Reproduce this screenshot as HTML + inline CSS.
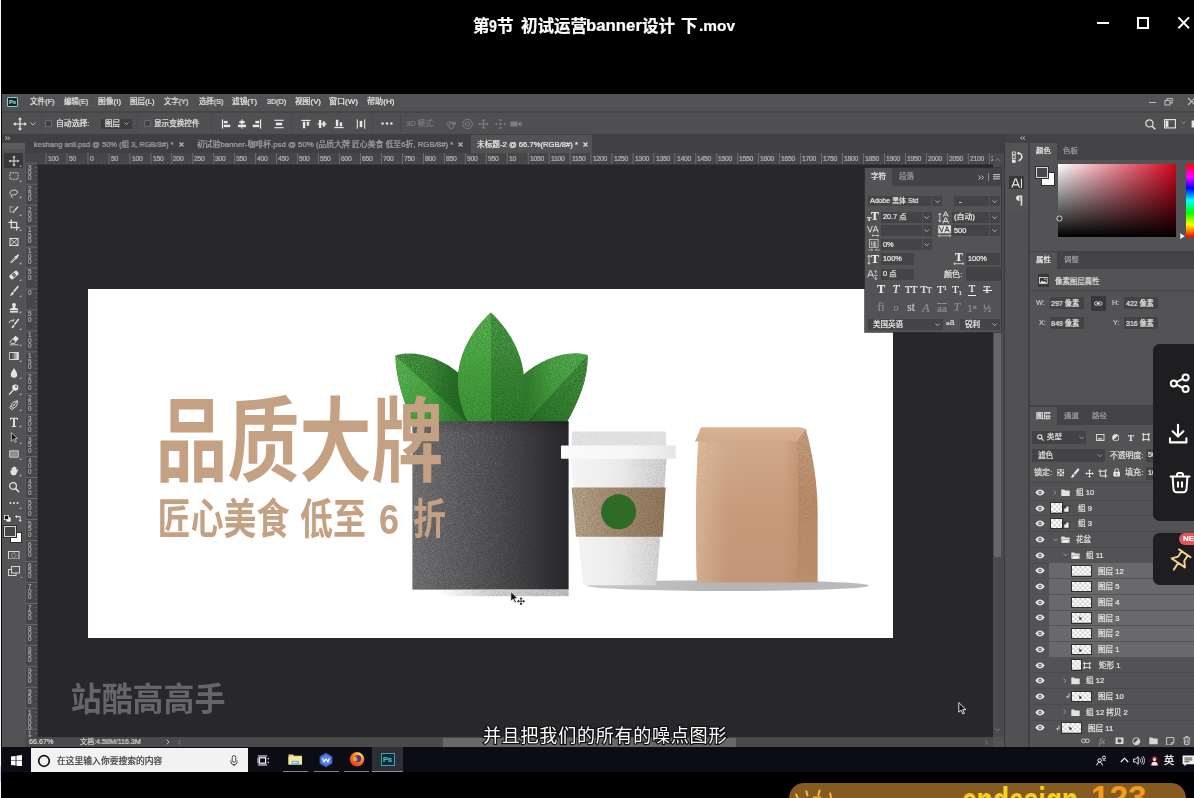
<!DOCTYPE html>
<html lang="zh"><head><meta charset="utf-8"><title>第9节 初试运营banner设计 下.mov</title>
<style>
html,body{margin:0;padding:0;background:#000}
body{width:1194px;height:798px;position:relative;overflow:hidden;font-family:"Liberation Sans","Noto Sans CJK SC",sans-serif}
.b{position:absolute;display:block}
.t{position:absolute;white-space:nowrap;font-family:"Liberation Sans","Noto Sans CJK SC",sans-serif;will-change:transform;-webkit-text-stroke:0.22px currentColor}
#ps{position:absolute;left:0;top:0;width:1194px;height:798px}
</style></head>
<body>
<div class="b" style="left:0px;top:0px;width:1194px;height:94px;background:#000;"></div><div class="t" style="left:473.3px;top:16.7px;font-size:16.50px;line-height:19.8px;color:#fff;font-weight:bold;">第</div><div class="t" style="left:489.1px;top:16.5px;font-size:16.40px;line-height:19.7px;color:#fff;font-weight:bold;transform:scaleX(0.86);transform-origin:0 0;">9</div><div class="t" style="left:497.2px;top:16.7px;font-size:16.50px;line-height:19.8px;color:#fff;font-weight:bold;">节</div><div class="t" style="left:520.7px;top:16.7px;font-size:16.50px;line-height:19.8px;color:#fff;font-weight:bold;">初试运营</div><div class="t" style="left:586.2px;top:16.2px;font-size:16.80px;line-height:20.2px;color:#fff;font-weight:bold;">banner</div><div class="t" style="left:642.2px;top:16.7px;font-size:16.50px;line-height:19.8px;color:#fff;font-weight:bold;">设计</div><div class="t" style="left:681.4px;top:16.7px;font-size:16.50px;line-height:19.8px;color:#fff;font-weight:bold;">下</div><div class="t" style="left:698.6px;top:17.0px;font-size:15.42px;line-height:18.5px;color:#fff;font-weight:bold;">.mov</div><div class="b" style="left:1096.9px;top:21.6px;width:12.3px;height:2.3px;background:#fff;"></div><div class="b" style="left:1137px;top:16.9px;width:12px;height:12px;background:transparent;border:2.1px solid #fff;box-sizing:border-box"></div><svg class="b" style="left:1177px;top:16px;" width="14" height="14" viewBox="0 0 14 14"><path d="M1.4 1.4 L12 12.2 M12 1.4 L1.4 12.2" stroke="#fff" stroke-width="2" fill="none"/></svg>
<div id="ps">
<div class="b" style="left:0px;top:94px;width:1194px;height:653px;background:#535355;"></div><div class="b" style="left:0px;top:94px;width:2px;height:653px;background:#0a0a0a;"></div><div class="b" style="left:2px;top:94px;width:1192.5px;height:17.5px;background:#525254;"></div><div class="b" style="left:2px;top:111.2px;width:1192.5px;height:1.4px;background:#464648;"></div><div class="b" style="left:6.8px;top:96.9px;width:11px;height:10.2px;background:#032a2f;border:1.1px solid #a4c2c4;box-sizing:border-box;border-radius:1px"></div><div class="t" style="left:9px;top:98.6px;font-size:6px;line-height:7px;color:#9ccaca;font-weight:bold;letter-spacing:-0.2px">Ps</div><div class="t" style="left:30.2px;top:97.1px;font-size:7.60px;line-height:9.1px;color:#e6e6e6;transform:scaleX(0.988);transform-origin:0 50%;">文件(F)</div><div class="t" style="left:64.0px;top:97.1px;font-size:7.60px;line-height:9.1px;color:#e6e6e6;transform:scaleX(0.963);transform-origin:0 50%;">编辑(E)</div><div class="t" style="left:98.0px;top:97.1px;font-size:7.60px;line-height:9.1px;color:#e6e6e6;transform:scaleX(1.028);transform-origin:0 50%;">图像(I)</div><div class="t" style="left:130.0px;top:97.1px;font-size:7.60px;line-height:9.1px;color:#e6e6e6;transform:scaleX(1.000);transform-origin:0 50%;">图层(L)</div><div class="t" style="left:164.0px;top:97.1px;font-size:7.60px;line-height:9.1px;color:#e6e6e6;transform:scaleX(0.963);transform-origin:0 50%;">文字(Y)</div><div class="t" style="left:198.5px;top:97.1px;font-size:7.60px;line-height:9.1px;color:#e6e6e6;transform:scaleX(0.967);transform-origin:0 50%;">选择(S)</div><div class="t" style="left:232.4px;top:97.1px;font-size:7.60px;line-height:9.1px;color:#e6e6e6;transform:scaleX(1.008);transform-origin:0 50%;">滤镜(T)</div><div class="t" style="left:266.8px;top:97.1px;font-size:7.60px;line-height:9.1px;color:#e6e6e6;transform:scaleX(0.947);transform-origin:0 50%;">3D(D)</div><div class="t" style="left:294.5px;top:97.1px;font-size:7.60px;line-height:9.1px;color:#e6e6e6;transform:scaleX(1.026);transform-origin:0 50%;">视图(V)</div><div class="t" style="left:328.5px;top:97.1px;font-size:7.60px;line-height:9.1px;color:#e6e6e6;transform:scaleX(1.057);transform-origin:0 50%;">窗口(W)</div><div class="t" style="left:366.5px;top:97.1px;font-size:7.60px;line-height:9.1px;color:#e6e6e6;transform:scaleX(1.068);transform-origin:0 50%;">帮助(H)</div><div class="b" style="left:1149px;top:102px;width:6.5px;height:1.4px;background:#bdbdbd;"></div><svg class="b" style="left:1164px;top:97px;" width="10" height="9" viewBox="0 0 10 9"><path d="M1 3.5h5v4.5h-5z M3.2 3.5v-2h5v4.5h-2.2" stroke="#bdbdbd" stroke-width="1.1" fill="none"/></svg><svg class="b" style="left:1187px;top:97px;" width="7" height="9" viewBox="0 0 7 9"><path d="M1 1l7 7M8 1l-7 7" stroke="#bdbdbd" stroke-width="1.2" fill="none"/></svg><div class="b" style="left:2px;top:112.5px;width:1192.5px;height:21.5px;background:#505052;"></div><div class="b" style="left:2px;top:134px;width:1003px;height:18.5px;background:#403f42;"></div><div class="b" style="left:470.8px;top:135px;width:121.5px;height:17.5px;background:#535355;"></div><div class="t" style="left:33.8px;top:139.9px;font-size:7.60px;line-height:9.1px;color:#a4a4a6;transform:scaleX(0.986);transform-origin:0 50%;">keshang anli.psd @ 50% (组 3, RGB/8#) *</div><div class="t" style="left:197.0px;top:139.9px;font-size:7.60px;line-height:9.1px;color:#a4a4a6;transform:scaleX(1.031);transform-origin:0 50%;">初试验banner-咖啡杯.psd @ 50% (品质大牌 匠心美食 低至6折, RGB/8#) *</div><div class="t" style="left:477.0px;top:139.9px;font-size:7.60px;line-height:9.1px;color:#ececec;transform:scaleX(1.008);transform-origin:0 50%;">未标题-2 @ 66.7%(RGB/8#) *</div><svg class="b" style="left:178.5px;top:141.8px;" width="5" height="5" viewBox="0 0 5 5"><path d="M0.5 0.5l4 4M4.5 0.5l-4 4" stroke="#b8b8b8" stroke-width="1.1"/></svg><svg class="b" style="left:458.0px;top:141.8px;" width="5" height="5" viewBox="0 0 5 5"><path d="M0.5 0.5l4 4M4.5 0.5l-4 4" stroke="#b8b8b8" stroke-width="1.1"/></svg><svg class="b" style="left:583.0px;top:141.8px;" width="5" height="5" viewBox="0 0 5 5"><path d="M0.5 0.5l4 4M4.5 0.5l-4 4" stroke="#e0e0e0" stroke-width="1.1"/></svg><svg class="b" style="left:4.5px;top:136.2px;" width="6" height="4.5" viewBox="0 0 6 4.5"><path d="M0.5 0.5l1.6 1.7-1.6 1.7M3 0.5l1.6 1.7-1.6 1.7" stroke="#ddd" stroke-width="0.9" fill="none"/></svg><div class="b" style="left:38px;top:164px;width:955px;height:573px;background:#28272b;"></div><div class="b" style="left:25.2px;top:152.5px;width:967.8px;height:11.8px;background:#464648;"></div><div class="b" style="left:25.2px;top:152.5px;width:12.6px;height:584.5px;background:#464648;"></div><div class="b" style="left:37.6px;top:164.1px;width:955.4px;height:0.8px;background:#38383a;"></div><div class="b" style="left:37.4px;top:164.1px;width:0.8px;height:572.9px;background:#38383a;"></div><svg class="b" style="left:0;top:0" width="1000" height="740"><rect x="45.7" y="153" width="0.8" height="11" fill="#77777a"/><rect x="50.0" y="161.8" width="0.6" height="2.2" fill="#5e5e61"/><rect x="54.2" y="161.8" width="0.6" height="2.2" fill="#5e5e61"/><rect x="58.4" y="161.8" width="0.6" height="2.2" fill="#5e5e61"/><rect x="62.5" y="161.8" width="0.6" height="2.2" fill="#5e5e61"/><rect x="66.6" y="153" width="0.8" height="11" fill="#77777a"/><rect x="70.9" y="161.8" width="0.6" height="2.2" fill="#5e5e61"/><rect x="75.1" y="161.8" width="0.6" height="2.2" fill="#5e5e61"/><rect x="79.3" y="161.8" width="0.6" height="2.2" fill="#5e5e61"/><rect x="83.5" y="161.8" width="0.6" height="2.2" fill="#5e5e61"/><rect x="87.6" y="153" width="0.8" height="11" fill="#77777a"/><rect x="91.9" y="161.8" width="0.6" height="2.2" fill="#5e5e61"/><rect x="96.1" y="161.8" width="0.6" height="2.2" fill="#5e5e61"/><rect x="100.3" y="161.8" width="0.6" height="2.2" fill="#5e5e61"/><rect x="104.5" y="161.8" width="0.6" height="2.2" fill="#5e5e61"/><rect x="108.6" y="153" width="0.8" height="11" fill="#77777a"/><rect x="112.9" y="161.8" width="0.6" height="2.2" fill="#5e5e61"/><rect x="117.0" y="161.8" width="0.6" height="2.2" fill="#5e5e61"/><rect x="121.2" y="161.8" width="0.6" height="2.2" fill="#5e5e61"/><rect x="125.4" y="161.8" width="0.6" height="2.2" fill="#5e5e61"/><rect x="129.5" y="153" width="0.8" height="11" fill="#77777a"/><rect x="133.8" y="161.8" width="0.6" height="2.2" fill="#5e5e61"/><rect x="138.0" y="161.8" width="0.6" height="2.2" fill="#5e5e61"/><rect x="142.2" y="161.8" width="0.6" height="2.2" fill="#5e5e61"/><rect x="146.4" y="161.8" width="0.6" height="2.2" fill="#5e5e61"/><rect x="150.5" y="153" width="0.8" height="11" fill="#77777a"/><rect x="154.8" y="161.8" width="0.6" height="2.2" fill="#5e5e61"/><rect x="159.0" y="161.8" width="0.6" height="2.2" fill="#5e5e61"/><rect x="163.2" y="161.8" width="0.6" height="2.2" fill="#5e5e61"/><rect x="167.3" y="161.8" width="0.6" height="2.2" fill="#5e5e61"/><rect x="171.4" y="153" width="0.8" height="11" fill="#77777a"/><rect x="175.7" y="161.8" width="0.6" height="2.2" fill="#5e5e61"/><rect x="179.9" y="161.8" width="0.6" height="2.2" fill="#5e5e61"/><rect x="184.1" y="161.8" width="0.6" height="2.2" fill="#5e5e61"/><rect x="188.3" y="161.8" width="0.6" height="2.2" fill="#5e5e61"/><rect x="192.4" y="153" width="0.8" height="11" fill="#77777a"/><rect x="196.7" y="161.8" width="0.6" height="2.2" fill="#5e5e61"/><rect x="200.9" y="161.8" width="0.6" height="2.2" fill="#5e5e61"/><rect x="205.1" y="161.8" width="0.6" height="2.2" fill="#5e5e61"/><rect x="209.3" y="161.8" width="0.6" height="2.2" fill="#5e5e61"/><rect x="213.4" y="153" width="0.8" height="11" fill="#77777a"/><rect x="217.7" y="161.8" width="0.6" height="2.2" fill="#5e5e61"/><rect x="221.8" y="161.8" width="0.6" height="2.2" fill="#5e5e61"/><rect x="226.0" y="161.8" width="0.6" height="2.2" fill="#5e5e61"/><rect x="230.2" y="161.8" width="0.6" height="2.2" fill="#5e5e61"/><rect x="234.3" y="153" width="0.8" height="11" fill="#77777a"/><rect x="238.6" y="161.8" width="0.6" height="2.2" fill="#5e5e61"/><rect x="242.8" y="161.8" width="0.6" height="2.2" fill="#5e5e61"/><rect x="247.0" y="161.8" width="0.6" height="2.2" fill="#5e5e61"/><rect x="251.2" y="161.8" width="0.6" height="2.2" fill="#5e5e61"/><rect x="255.3" y="153" width="0.8" height="11" fill="#77777a"/><rect x="259.6" y="161.8" width="0.6" height="2.2" fill="#5e5e61"/><rect x="263.8" y="161.8" width="0.6" height="2.2" fill="#5e5e61"/><rect x="268.0" y="161.8" width="0.6" height="2.2" fill="#5e5e61"/><rect x="272.1" y="161.8" width="0.6" height="2.2" fill="#5e5e61"/><rect x="276.2" y="153" width="0.8" height="11" fill="#77777a"/><rect x="280.5" y="161.8" width="0.6" height="2.2" fill="#5e5e61"/><rect x="284.7" y="161.8" width="0.6" height="2.2" fill="#5e5e61"/><rect x="288.9" y="161.8" width="0.6" height="2.2" fill="#5e5e61"/><rect x="293.1" y="161.8" width="0.6" height="2.2" fill="#5e5e61"/><rect x="297.2" y="153" width="0.8" height="11" fill="#77777a"/><rect x="301.5" y="161.8" width="0.6" height="2.2" fill="#5e5e61"/><rect x="305.7" y="161.8" width="0.6" height="2.2" fill="#5e5e61"/><rect x="309.9" y="161.8" width="0.6" height="2.2" fill="#5e5e61"/><rect x="314.1" y="161.8" width="0.6" height="2.2" fill="#5e5e61"/><rect x="318.2" y="153" width="0.8" height="11" fill="#77777a"/><rect x="322.5" y="161.8" width="0.6" height="2.2" fill="#5e5e61"/><rect x="326.6" y="161.8" width="0.6" height="2.2" fill="#5e5e61"/><rect x="330.8" y="161.8" width="0.6" height="2.2" fill="#5e5e61"/><rect x="335.0" y="161.8" width="0.6" height="2.2" fill="#5e5e61"/><rect x="339.1" y="153" width="0.8" height="11" fill="#77777a"/><rect x="343.4" y="161.8" width="0.6" height="2.2" fill="#5e5e61"/><rect x="347.6" y="161.8" width="0.6" height="2.2" fill="#5e5e61"/><rect x="351.8" y="161.8" width="0.6" height="2.2" fill="#5e5e61"/><rect x="356.0" y="161.8" width="0.6" height="2.2" fill="#5e5e61"/><rect x="360.1" y="153" width="0.8" height="11" fill="#77777a"/><rect x="364.4" y="161.8" width="0.6" height="2.2" fill="#5e5e61"/><rect x="368.6" y="161.8" width="0.6" height="2.2" fill="#5e5e61"/><rect x="372.8" y="161.8" width="0.6" height="2.2" fill="#5e5e61"/><rect x="376.9" y="161.8" width="0.6" height="2.2" fill="#5e5e61"/><rect x="381.0" y="153" width="0.8" height="11" fill="#77777a"/><rect x="385.3" y="161.8" width="0.6" height="2.2" fill="#5e5e61"/><rect x="389.5" y="161.8" width="0.6" height="2.2" fill="#5e5e61"/><rect x="393.7" y="161.8" width="0.6" height="2.2" fill="#5e5e61"/><rect x="397.9" y="161.8" width="0.6" height="2.2" fill="#5e5e61"/><rect x="402.0" y="153" width="0.8" height="11" fill="#77777a"/><rect x="406.3" y="161.8" width="0.6" height="2.2" fill="#5e5e61"/><rect x="410.5" y="161.8" width="0.6" height="2.2" fill="#5e5e61"/><rect x="414.7" y="161.8" width="0.6" height="2.2" fill="#5e5e61"/><rect x="418.9" y="161.8" width="0.6" height="2.2" fill="#5e5e61"/><rect x="423.0" y="153" width="0.8" height="11" fill="#77777a"/><rect x="427.3" y="161.8" width="0.6" height="2.2" fill="#5e5e61"/><rect x="431.4" y="161.8" width="0.6" height="2.2" fill="#5e5e61"/><rect x="435.6" y="161.8" width="0.6" height="2.2" fill="#5e5e61"/><rect x="439.8" y="161.8" width="0.6" height="2.2" fill="#5e5e61"/><rect x="443.9" y="153" width="0.8" height="11" fill="#77777a"/><rect x="448.2" y="161.8" width="0.6" height="2.2" fill="#5e5e61"/><rect x="452.4" y="161.8" width="0.6" height="2.2" fill="#5e5e61"/><rect x="456.6" y="161.8" width="0.6" height="2.2" fill="#5e5e61"/><rect x="460.8" y="161.8" width="0.6" height="2.2" fill="#5e5e61"/><rect x="464.9" y="153" width="0.8" height="11" fill="#77777a"/><rect x="469.2" y="161.8" width="0.6" height="2.2" fill="#5e5e61"/><rect x="473.4" y="161.8" width="0.6" height="2.2" fill="#5e5e61"/><rect x="477.6" y="161.8" width="0.6" height="2.2" fill="#5e5e61"/><rect x="481.7" y="161.8" width="0.6" height="2.2" fill="#5e5e61"/><rect x="485.8" y="153" width="0.8" height="11" fill="#77777a"/><rect x="490.1" y="161.8" width="0.6" height="2.2" fill="#5e5e61"/><rect x="494.3" y="161.8" width="0.6" height="2.2" fill="#5e5e61"/><rect x="498.5" y="161.8" width="0.6" height="2.2" fill="#5e5e61"/><rect x="502.7" y="161.8" width="0.6" height="2.2" fill="#5e5e61"/><rect x="506.8" y="153" width="0.8" height="11" fill="#77777a"/><rect x="511.1" y="161.8" width="0.6" height="2.2" fill="#5e5e61"/><rect x="515.3" y="161.8" width="0.6" height="2.2" fill="#5e5e61"/><rect x="519.5" y="161.8" width="0.6" height="2.2" fill="#5e5e61"/><rect x="523.7" y="161.8" width="0.6" height="2.2" fill="#5e5e61"/><rect x="527.8" y="153" width="0.8" height="11" fill="#77777a"/><rect x="532.1" y="161.8" width="0.6" height="2.2" fill="#5e5e61"/><rect x="536.2" y="161.8" width="0.6" height="2.2" fill="#5e5e61"/><rect x="540.4" y="161.8" width="0.6" height="2.2" fill="#5e5e61"/><rect x="544.6" y="161.8" width="0.6" height="2.2" fill="#5e5e61"/><rect x="548.7" y="153" width="0.8" height="11" fill="#77777a"/><rect x="553.0" y="161.8" width="0.6" height="2.2" fill="#5e5e61"/><rect x="557.2" y="161.8" width="0.6" height="2.2" fill="#5e5e61"/><rect x="561.4" y="161.8" width="0.6" height="2.2" fill="#5e5e61"/><rect x="565.6" y="161.8" width="0.6" height="2.2" fill="#5e5e61"/><rect x="569.7" y="153" width="0.8" height="11" fill="#77777a"/><rect x="574.0" y="161.8" width="0.6" height="2.2" fill="#5e5e61"/><rect x="578.2" y="161.8" width="0.6" height="2.2" fill="#5e5e61"/><rect x="582.4" y="161.8" width="0.6" height="2.2" fill="#5e5e61"/><rect x="586.5" y="161.8" width="0.6" height="2.2" fill="#5e5e61"/><rect x="590.6" y="153" width="0.8" height="11" fill="#77777a"/><rect x="594.9" y="161.8" width="0.6" height="2.2" fill="#5e5e61"/><rect x="599.1" y="161.8" width="0.6" height="2.2" fill="#5e5e61"/><rect x="603.3" y="161.8" width="0.6" height="2.2" fill="#5e5e61"/><rect x="607.5" y="161.8" width="0.6" height="2.2" fill="#5e5e61"/><rect x="611.6" y="153" width="0.8" height="11" fill="#77777a"/><rect x="615.9" y="161.8" width="0.6" height="2.2" fill="#5e5e61"/><rect x="620.1" y="161.8" width="0.6" height="2.2" fill="#5e5e61"/><rect x="624.3" y="161.8" width="0.6" height="2.2" fill="#5e5e61"/><rect x="628.5" y="161.8" width="0.6" height="2.2" fill="#5e5e61"/><rect x="632.6" y="153" width="0.8" height="11" fill="#77777a"/><rect x="636.9" y="161.8" width="0.6" height="2.2" fill="#5e5e61"/><rect x="641.0" y="161.8" width="0.6" height="2.2" fill="#5e5e61"/><rect x="645.2" y="161.8" width="0.6" height="2.2" fill="#5e5e61"/><rect x="649.4" y="161.8" width="0.6" height="2.2" fill="#5e5e61"/><rect x="653.5" y="153" width="0.8" height="11" fill="#77777a"/><rect x="657.8" y="161.8" width="0.6" height="2.2" fill="#5e5e61"/><rect x="662.0" y="161.8" width="0.6" height="2.2" fill="#5e5e61"/><rect x="666.2" y="161.8" width="0.6" height="2.2" fill="#5e5e61"/><rect x="670.4" y="161.8" width="0.6" height="2.2" fill="#5e5e61"/><rect x="674.5" y="153" width="0.8" height="11" fill="#77777a"/><rect x="678.8" y="161.8" width="0.6" height="2.2" fill="#5e5e61"/><rect x="683.0" y="161.8" width="0.6" height="2.2" fill="#5e5e61"/><rect x="687.2" y="161.8" width="0.6" height="2.2" fill="#5e5e61"/><rect x="691.3" y="161.8" width="0.6" height="2.2" fill="#5e5e61"/><rect x="695.4" y="153" width="0.8" height="11" fill="#77777a"/><rect x="699.7" y="161.8" width="0.6" height="2.2" fill="#5e5e61"/><rect x="703.9" y="161.8" width="0.6" height="2.2" fill="#5e5e61"/><rect x="708.1" y="161.8" width="0.6" height="2.2" fill="#5e5e61"/><rect x="712.3" y="161.8" width="0.6" height="2.2" fill="#5e5e61"/><rect x="716.4" y="153" width="0.8" height="11" fill="#77777a"/><rect x="720.7" y="161.8" width="0.6" height="2.2" fill="#5e5e61"/><rect x="724.9" y="161.8" width="0.6" height="2.2" fill="#5e5e61"/><rect x="729.1" y="161.8" width="0.6" height="2.2" fill="#5e5e61"/><rect x="733.3" y="161.8" width="0.6" height="2.2" fill="#5e5e61"/><rect x="737.4" y="153" width="0.8" height="11" fill="#77777a"/><rect x="741.7" y="161.8" width="0.6" height="2.2" fill="#5e5e61"/><rect x="745.8" y="161.8" width="0.6" height="2.2" fill="#5e5e61"/><rect x="750.0" y="161.8" width="0.6" height="2.2" fill="#5e5e61"/><rect x="754.2" y="161.8" width="0.6" height="2.2" fill="#5e5e61"/><rect x="758.3" y="153" width="0.8" height="11" fill="#77777a"/><rect x="762.6" y="161.8" width="0.6" height="2.2" fill="#5e5e61"/><rect x="766.8" y="161.8" width="0.6" height="2.2" fill="#5e5e61"/><rect x="771.0" y="161.8" width="0.6" height="2.2" fill="#5e5e61"/><rect x="775.2" y="161.8" width="0.6" height="2.2" fill="#5e5e61"/><rect x="779.3" y="153" width="0.8" height="11" fill="#77777a"/><rect x="783.6" y="161.8" width="0.6" height="2.2" fill="#5e5e61"/><rect x="787.8" y="161.8" width="0.6" height="2.2" fill="#5e5e61"/><rect x="792.0" y="161.8" width="0.6" height="2.2" fill="#5e5e61"/><rect x="796.1" y="161.8" width="0.6" height="2.2" fill="#5e5e61"/><rect x="800.2" y="153" width="0.8" height="11" fill="#77777a"/><rect x="804.5" y="161.8" width="0.6" height="2.2" fill="#5e5e61"/><rect x="808.7" y="161.8" width="0.6" height="2.2" fill="#5e5e61"/><rect x="812.9" y="161.8" width="0.6" height="2.2" fill="#5e5e61"/><rect x="817.1" y="161.8" width="0.6" height="2.2" fill="#5e5e61"/><rect x="821.2" y="153" width="0.8" height="11" fill="#77777a"/><rect x="825.5" y="161.8" width="0.6" height="2.2" fill="#5e5e61"/><rect x="829.7" y="161.8" width="0.6" height="2.2" fill="#5e5e61"/><rect x="833.9" y="161.8" width="0.6" height="2.2" fill="#5e5e61"/><rect x="838.1" y="161.8" width="0.6" height="2.2" fill="#5e5e61"/><rect x="842.2" y="153" width="0.8" height="11" fill="#77777a"/><rect x="846.5" y="161.8" width="0.6" height="2.2" fill="#5e5e61"/><rect x="850.6" y="161.8" width="0.6" height="2.2" fill="#5e5e61"/><rect x="854.8" y="161.8" width="0.6" height="2.2" fill="#5e5e61"/><rect x="859.0" y="161.8" width="0.6" height="2.2" fill="#5e5e61"/><rect x="863.1" y="153" width="0.8" height="11" fill="#77777a"/><rect x="867.4" y="161.8" width="0.6" height="2.2" fill="#5e5e61"/><rect x="871.6" y="161.8" width="0.6" height="2.2" fill="#5e5e61"/><rect x="875.8" y="161.8" width="0.6" height="2.2" fill="#5e5e61"/><rect x="880.0" y="161.8" width="0.6" height="2.2" fill="#5e5e61"/><rect x="884.1" y="153" width="0.8" height="11" fill="#77777a"/><rect x="888.4" y="161.8" width="0.6" height="2.2" fill="#5e5e61"/><rect x="892.6" y="161.8" width="0.6" height="2.2" fill="#5e5e61"/><rect x="896.8" y="161.8" width="0.6" height="2.2" fill="#5e5e61"/><rect x="900.9" y="161.8" width="0.6" height="2.2" fill="#5e5e61"/><rect x="905.0" y="153" width="0.8" height="11" fill="#77777a"/><rect x="909.3" y="161.8" width="0.6" height="2.2" fill="#5e5e61"/><rect x="913.5" y="161.8" width="0.6" height="2.2" fill="#5e5e61"/><rect x="917.7" y="161.8" width="0.6" height="2.2" fill="#5e5e61"/><rect x="921.9" y="161.8" width="0.6" height="2.2" fill="#5e5e61"/><rect x="926.0" y="153" width="0.8" height="11" fill="#77777a"/><rect x="930.3" y="161.8" width="0.6" height="2.2" fill="#5e5e61"/><rect x="934.5" y="161.8" width="0.6" height="2.2" fill="#5e5e61"/><rect x="938.7" y="161.8" width="0.6" height="2.2" fill="#5e5e61"/><rect x="942.9" y="161.8" width="0.6" height="2.2" fill="#5e5e61"/><rect x="947.0" y="153" width="0.8" height="11" fill="#77777a"/><rect x="951.3" y="161.8" width="0.6" height="2.2" fill="#5e5e61"/><rect x="955.4" y="161.8" width="0.6" height="2.2" fill="#5e5e61"/><rect x="959.6" y="161.8" width="0.6" height="2.2" fill="#5e5e61"/><rect x="963.8" y="161.8" width="0.6" height="2.2" fill="#5e5e61"/><rect x="967.9" y="153" width="0.8" height="11" fill="#77777a"/><rect x="972.2" y="161.8" width="0.6" height="2.2" fill="#5e5e61"/><rect x="976.4" y="161.8" width="0.6" height="2.2" fill="#5e5e61"/><rect x="980.6" y="161.8" width="0.6" height="2.2" fill="#5e5e61"/><rect x="984.8" y="161.8" width="0.6" height="2.2" fill="#5e5e61"/><rect x="988.9" y="153" width="0.8" height="11" fill="#77777a"/><rect x="26" y="162.8" width="11.5" height="0.8" fill="#707073"/><rect x="34.5" y="167.1" width="3" height="0.6" fill="#68686b"/><rect x="34.5" y="171.3" width="3" height="0.6" fill="#68686b"/><rect x="34.5" y="175.5" width="3" height="0.6" fill="#68686b"/><rect x="34.5" y="179.7" width="3" height="0.6" fill="#68686b"/><rect x="26" y="183.8" width="11.5" height="0.8" fill="#707073"/><rect x="34.5" y="188.1" width="3" height="0.6" fill="#68686b"/><rect x="34.5" y="192.3" width="3" height="0.6" fill="#68686b"/><rect x="34.5" y="196.5" width="3" height="0.6" fill="#68686b"/><rect x="34.5" y="200.7" width="3" height="0.6" fill="#68686b"/><rect x="26" y="204.8" width="11.5" height="0.8" fill="#707073"/><rect x="34.5" y="209.1" width="3" height="0.6" fill="#68686b"/><rect x="34.5" y="213.2" width="3" height="0.6" fill="#68686b"/><rect x="34.5" y="217.4" width="3" height="0.6" fill="#68686b"/><rect x="34.5" y="221.6" width="3" height="0.6" fill="#68686b"/><rect x="26" y="225.7" width="11.5" height="0.8" fill="#707073"/><rect x="34.5" y="230.0" width="3" height="0.6" fill="#68686b"/><rect x="34.5" y="234.2" width="3" height="0.6" fill="#68686b"/><rect x="34.5" y="238.4" width="3" height="0.6" fill="#68686b"/><rect x="34.5" y="242.6" width="3" height="0.6" fill="#68686b"/><rect x="26" y="246.7" width="11.5" height="0.8" fill="#707073"/><rect x="34.5" y="251.0" width="3" height="0.6" fill="#68686b"/><rect x="34.5" y="255.2" width="3" height="0.6" fill="#68686b"/><rect x="34.5" y="259.4" width="3" height="0.6" fill="#68686b"/><rect x="34.5" y="263.5" width="3" height="0.6" fill="#68686b"/><rect x="26" y="267.6" width="11.5" height="0.8" fill="#707073"/><rect x="34.5" y="271.9" width="3" height="0.6" fill="#68686b"/><rect x="34.5" y="276.1" width="3" height="0.6" fill="#68686b"/><rect x="34.5" y="280.3" width="3" height="0.6" fill="#68686b"/><rect x="34.5" y="284.5" width="3" height="0.6" fill="#68686b"/><rect x="26" y="288.6" width="11.5" height="0.8" fill="#707073"/><rect x="34.5" y="292.9" width="3" height="0.6" fill="#68686b"/><rect x="34.5" y="297.1" width="3" height="0.6" fill="#68686b"/><rect x="34.5" y="301.3" width="3" height="0.6" fill="#68686b"/><rect x="34.5" y="305.5" width="3" height="0.6" fill="#68686b"/><rect x="26" y="309.6" width="11.5" height="0.8" fill="#707073"/><rect x="34.5" y="313.9" width="3" height="0.6" fill="#68686b"/><rect x="34.5" y="318.0" width="3" height="0.6" fill="#68686b"/><rect x="34.5" y="322.2" width="3" height="0.6" fill="#68686b"/><rect x="34.5" y="326.4" width="3" height="0.6" fill="#68686b"/><rect x="26" y="330.5" width="11.5" height="0.8" fill="#707073"/><rect x="34.5" y="334.8" width="3" height="0.6" fill="#68686b"/><rect x="34.5" y="339.0" width="3" height="0.6" fill="#68686b"/><rect x="34.5" y="343.2" width="3" height="0.6" fill="#68686b"/><rect x="34.5" y="347.4" width="3" height="0.6" fill="#68686b"/><rect x="26" y="351.5" width="11.5" height="0.8" fill="#707073"/><rect x="34.5" y="355.8" width="3" height="0.6" fill="#68686b"/><rect x="34.5" y="360.0" width="3" height="0.6" fill="#68686b"/><rect x="34.5" y="364.2" width="3" height="0.6" fill="#68686b"/><rect x="34.5" y="368.3" width="3" height="0.6" fill="#68686b"/><rect x="26" y="372.4" width="11.5" height="0.8" fill="#707073"/><rect x="34.5" y="376.7" width="3" height="0.6" fill="#68686b"/><rect x="34.5" y="380.9" width="3" height="0.6" fill="#68686b"/><rect x="34.5" y="385.1" width="3" height="0.6" fill="#68686b"/><rect x="34.5" y="389.3" width="3" height="0.6" fill="#68686b"/><rect x="26" y="393.4" width="11.5" height="0.8" fill="#707073"/><rect x="34.5" y="397.7" width="3" height="0.6" fill="#68686b"/><rect x="34.5" y="401.9" width="3" height="0.6" fill="#68686b"/><rect x="34.5" y="406.1" width="3" height="0.6" fill="#68686b"/><rect x="34.5" y="410.3" width="3" height="0.6" fill="#68686b"/><rect x="26" y="414.4" width="11.5" height="0.8" fill="#707073"/><rect x="34.5" y="418.7" width="3" height="0.6" fill="#68686b"/><rect x="34.5" y="422.8" width="3" height="0.6" fill="#68686b"/><rect x="34.5" y="427.0" width="3" height="0.6" fill="#68686b"/><rect x="34.5" y="431.2" width="3" height="0.6" fill="#68686b"/><rect x="26" y="435.3" width="11.5" height="0.8" fill="#707073"/><rect x="34.5" y="439.6" width="3" height="0.6" fill="#68686b"/><rect x="34.5" y="443.8" width="3" height="0.6" fill="#68686b"/><rect x="34.5" y="448.0" width="3" height="0.6" fill="#68686b"/><rect x="34.5" y="452.2" width="3" height="0.6" fill="#68686b"/><rect x="26" y="456.3" width="11.5" height="0.8" fill="#707073"/><rect x="34.5" y="460.6" width="3" height="0.6" fill="#68686b"/><rect x="34.5" y="464.8" width="3" height="0.6" fill="#68686b"/><rect x="34.5" y="469.0" width="3" height="0.6" fill="#68686b"/><rect x="34.5" y="473.1" width="3" height="0.6" fill="#68686b"/><rect x="26" y="477.2" width="11.5" height="0.8" fill="#707073"/><rect x="34.5" y="481.5" width="3" height="0.6" fill="#68686b"/><rect x="34.5" y="485.7" width="3" height="0.6" fill="#68686b"/><rect x="34.5" y="489.9" width="3" height="0.6" fill="#68686b"/><rect x="34.5" y="494.1" width="3" height="0.6" fill="#68686b"/><rect x="26" y="498.2" width="11.5" height="0.8" fill="#707073"/><rect x="34.5" y="502.5" width="3" height="0.6" fill="#68686b"/><rect x="34.5" y="506.7" width="3" height="0.6" fill="#68686b"/><rect x="34.5" y="510.9" width="3" height="0.6" fill="#68686b"/><rect x="34.5" y="515.1" width="3" height="0.6" fill="#68686b"/><rect x="26" y="519.2" width="11.5" height="0.8" fill="#707073"/><rect x="34.5" y="523.5" width="3" height="0.6" fill="#68686b"/><rect x="34.5" y="527.6" width="3" height="0.6" fill="#68686b"/><rect x="34.5" y="531.8" width="3" height="0.6" fill="#68686b"/><rect x="34.5" y="536.0" width="3" height="0.6" fill="#68686b"/><rect x="26" y="540.1" width="11.5" height="0.8" fill="#707073"/><rect x="34.5" y="544.4" width="3" height="0.6" fill="#68686b"/><rect x="34.5" y="548.6" width="3" height="0.6" fill="#68686b"/><rect x="34.5" y="552.8" width="3" height="0.6" fill="#68686b"/><rect x="34.5" y="557.0" width="3" height="0.6" fill="#68686b"/><rect x="26" y="561.1" width="11.5" height="0.8" fill="#707073"/><rect x="34.5" y="565.4" width="3" height="0.6" fill="#68686b"/><rect x="34.5" y="569.6" width="3" height="0.6" fill="#68686b"/><rect x="34.5" y="573.8" width="3" height="0.6" fill="#68686b"/><rect x="34.5" y="577.9" width="3" height="0.6" fill="#68686b"/><rect x="26" y="582.0" width="11.5" height="0.8" fill="#707073"/><rect x="34.5" y="586.3" width="3" height="0.6" fill="#68686b"/><rect x="34.5" y="590.5" width="3" height="0.6" fill="#68686b"/><rect x="34.5" y="594.7" width="3" height="0.6" fill="#68686b"/><rect x="34.5" y="598.9" width="3" height="0.6" fill="#68686b"/><rect x="26" y="603.0" width="11.5" height="0.8" fill="#707073"/><rect x="34.5" y="607.3" width="3" height="0.6" fill="#68686b"/><rect x="34.5" y="611.5" width="3" height="0.6" fill="#68686b"/><rect x="34.5" y="615.7" width="3" height="0.6" fill="#68686b"/><rect x="34.5" y="619.9" width="3" height="0.6" fill="#68686b"/><rect x="26" y="624.0" width="11.5" height="0.8" fill="#707073"/><rect x="34.5" y="628.3" width="3" height="0.6" fill="#68686b"/><rect x="34.5" y="632.4" width="3" height="0.6" fill="#68686b"/><rect x="34.5" y="636.6" width="3" height="0.6" fill="#68686b"/><rect x="34.5" y="640.8" width="3" height="0.6" fill="#68686b"/><rect x="26" y="644.9" width="11.5" height="0.8" fill="#707073"/><rect x="34.5" y="649.2" width="3" height="0.6" fill="#68686b"/><rect x="34.5" y="653.4" width="3" height="0.6" fill="#68686b"/><rect x="34.5" y="657.6" width="3" height="0.6" fill="#68686b"/><rect x="34.5" y="661.8" width="3" height="0.6" fill="#68686b"/><rect x="26" y="665.9" width="11.5" height="0.8" fill="#707073"/><rect x="34.5" y="670.2" width="3" height="0.6" fill="#68686b"/><rect x="34.5" y="674.4" width="3" height="0.6" fill="#68686b"/><rect x="34.5" y="678.6" width="3" height="0.6" fill="#68686b"/><rect x="34.5" y="682.7" width="3" height="0.6" fill="#68686b"/><rect x="26" y="686.8" width="11.5" height="0.8" fill="#707073"/><rect x="34.5" y="691.1" width="3" height="0.6" fill="#68686b"/><rect x="34.5" y="695.3" width="3" height="0.6" fill="#68686b"/><rect x="34.5" y="699.5" width="3" height="0.6" fill="#68686b"/><rect x="34.5" y="703.7" width="3" height="0.6" fill="#68686b"/><rect x="26" y="707.8" width="11.5" height="0.8" fill="#707073"/><rect x="34.5" y="712.1" width="3" height="0.6" fill="#68686b"/><rect x="34.5" y="716.3" width="3" height="0.6" fill="#68686b"/><rect x="34.5" y="720.5" width="3" height="0.6" fill="#68686b"/><rect x="34.5" y="724.7" width="3" height="0.6" fill="#68686b"/><rect x="26" y="728.8" width="11.5" height="0.8" fill="#707073"/><rect x="34.5" y="733.1" width="3" height="0.6" fill="#68686b"/></svg><div class="t" style="left:47.7px;top:154.6px;font-size:6.8px;line-height:8px;color:#b2b2b4;letter-spacing:-0.3px">100</div><div class="t" style="left:68.6px;top:154.6px;font-size:6.8px;line-height:8px;color:#b2b2b4;letter-spacing:-0.3px">50</div><div class="t" style="left:89.6px;top:154.6px;font-size:6.8px;line-height:8px;color:#b2b2b4;letter-spacing:-0.3px">0</div><div class="t" style="left:110.6px;top:154.6px;font-size:6.8px;line-height:8px;color:#b2b2b4;letter-spacing:-0.3px">50</div><div class="t" style="left:131.5px;top:154.6px;font-size:6.8px;line-height:8px;color:#b2b2b4;letter-spacing:-0.3px">100</div><div class="t" style="left:152.5px;top:154.6px;font-size:6.8px;line-height:8px;color:#b2b2b4;letter-spacing:-0.3px">150</div><div class="t" style="left:173.4px;top:154.6px;font-size:6.8px;line-height:8px;color:#b2b2b4;letter-spacing:-0.3px">200</div><div class="t" style="left:194.4px;top:154.6px;font-size:6.8px;line-height:8px;color:#b2b2b4;letter-spacing:-0.3px">250</div><div class="t" style="left:215.4px;top:154.6px;font-size:6.8px;line-height:8px;color:#b2b2b4;letter-spacing:-0.3px">300</div><div class="t" style="left:236.3px;top:154.6px;font-size:6.8px;line-height:8px;color:#b2b2b4;letter-spacing:-0.3px">350</div><div class="t" style="left:257.3px;top:154.6px;font-size:6.8px;line-height:8px;color:#b2b2b4;letter-spacing:-0.3px">400</div><div class="t" style="left:278.2px;top:154.6px;font-size:6.8px;line-height:8px;color:#b2b2b4;letter-spacing:-0.3px">450</div><div class="t" style="left:299.2px;top:154.6px;font-size:6.8px;line-height:8px;color:#b2b2b4;letter-spacing:-0.3px">500</div><div class="t" style="left:320.2px;top:154.6px;font-size:6.8px;line-height:8px;color:#b2b2b4;letter-spacing:-0.3px">550</div><div class="t" style="left:341.1px;top:154.6px;font-size:6.8px;line-height:8px;color:#b2b2b4;letter-spacing:-0.3px">600</div><div class="t" style="left:362.1px;top:154.6px;font-size:6.8px;line-height:8px;color:#b2b2b4;letter-spacing:-0.3px">650</div><div class="t" style="left:383.0px;top:154.6px;font-size:6.8px;line-height:8px;color:#b2b2b4;letter-spacing:-0.3px">700</div><div class="t" style="left:404.0px;top:154.6px;font-size:6.8px;line-height:8px;color:#b2b2b4;letter-spacing:-0.3px">750</div><div class="t" style="left:425.0px;top:154.6px;font-size:6.8px;line-height:8px;color:#b2b2b4;letter-spacing:-0.3px">800</div><div class="t" style="left:445.9px;top:154.6px;font-size:6.8px;line-height:8px;color:#b2b2b4;letter-spacing:-0.3px">850</div><div class="t" style="left:466.9px;top:154.6px;font-size:6.8px;line-height:8px;color:#b2b2b4;letter-spacing:-0.3px">900</div><div class="t" style="left:487.8px;top:154.6px;font-size:6.8px;line-height:8px;color:#b2b2b4;letter-spacing:-0.3px">950</div><div class="t" style="left:508.8px;top:154.6px;font-size:6.8px;line-height:8px;color:#b2b2b4;letter-spacing:-0.3px">10</div><div class="t" style="left:529.8px;top:154.6px;font-size:6.8px;line-height:8px;color:#b2b2b4;letter-spacing:-0.3px">1050</div><div class="t" style="left:550.7px;top:154.6px;font-size:6.8px;line-height:8px;color:#b2b2b4;letter-spacing:-0.3px">1100</div><div class="t" style="left:571.7px;top:154.6px;font-size:6.8px;line-height:8px;color:#b2b2b4;letter-spacing:-0.3px">1150</div><div class="t" style="left:592.6px;top:154.6px;font-size:6.8px;line-height:8px;color:#b2b2b4;letter-spacing:-0.3px">1200</div><div class="t" style="left:613.6px;top:154.6px;font-size:6.8px;line-height:8px;color:#b2b2b4;letter-spacing:-0.3px">1250</div><div class="t" style="left:634.6px;top:154.6px;font-size:6.8px;line-height:8px;color:#b2b2b4;letter-spacing:-0.3px">1300</div><div class="t" style="left:655.5px;top:154.6px;font-size:6.8px;line-height:8px;color:#b2b2b4;letter-spacing:-0.3px">1350</div><div class="t" style="left:676.5px;top:154.6px;font-size:6.8px;line-height:8px;color:#b2b2b4;letter-spacing:-0.3px">1400</div><div class="t" style="left:697.4px;top:154.6px;font-size:6.8px;line-height:8px;color:#b2b2b4;letter-spacing:-0.3px">1450</div><div class="t" style="left:718.4px;top:154.6px;font-size:6.8px;line-height:8px;color:#b2b2b4;letter-spacing:-0.3px">1500</div><div class="t" style="left:739.4px;top:154.6px;font-size:6.8px;line-height:8px;color:#b2b2b4;letter-spacing:-0.3px">1550</div><div class="t" style="left:760.3px;top:154.6px;font-size:6.8px;line-height:8px;color:#b2b2b4;letter-spacing:-0.3px">1600</div><div class="t" style="left:781.3px;top:154.6px;font-size:6.8px;line-height:8px;color:#b2b2b4;letter-spacing:-0.3px">1650</div><div class="t" style="left:802.2px;top:154.6px;font-size:6.8px;line-height:8px;color:#b2b2b4;letter-spacing:-0.3px">1700</div><div class="t" style="left:823.2px;top:154.6px;font-size:6.8px;line-height:8px;color:#b2b2b4;letter-spacing:-0.3px">1750</div><div class="t" style="left:844.2px;top:154.6px;font-size:6.8px;line-height:8px;color:#b2b2b4;letter-spacing:-0.3px">1800</div><div class="t" style="left:865.1px;top:154.6px;font-size:6.8px;line-height:8px;color:#b2b2b4;letter-spacing:-0.3px">1850</div><div class="t" style="left:886.1px;top:154.6px;font-size:6.8px;line-height:8px;color:#b2b2b4;letter-spacing:-0.3px">1900</div><div class="t" style="left:907.0px;top:154.6px;font-size:6.8px;line-height:8px;color:#b2b2b4;letter-spacing:-0.3px">1950</div><div class="t" style="left:928.0px;top:154.6px;font-size:6.8px;line-height:8px;color:#b2b2b4;letter-spacing:-0.3px">2000</div><div class="t" style="left:949.0px;top:154.6px;font-size:6.8px;line-height:8px;color:#b2b2b4;letter-spacing:-0.3px">2050</div><div class="t" style="left:969.9px;top:154.6px;font-size:6.8px;line-height:8px;color:#b2b2b4;letter-spacing:-0.3px">2100</div><div class="t" style="left:990.9px;top:154.6px;font-size:6.8px;line-height:8px;color:#b2b2b4;letter-spacing:-0.3px">2150</div><div class="t" style="left:27.6px;top:164.5px;font-size:6.3px;line-height:5.4px;color:#a8a8aa">3</div><div class="t" style="left:27.6px;top:169.8px;font-size:6.3px;line-height:5.4px;color:#a8a8aa">0</div><div class="t" style="left:27.6px;top:175.1px;font-size:6.3px;line-height:5.4px;color:#a8a8aa">0</div><div class="t" style="left:27.6px;top:185.5px;font-size:6.3px;line-height:5.4px;color:#a8a8aa">2</div><div class="t" style="left:27.6px;top:190.8px;font-size:6.3px;line-height:5.4px;color:#a8a8aa">5</div><div class="t" style="left:27.6px;top:196.1px;font-size:6.3px;line-height:5.4px;color:#a8a8aa">0</div><div class="t" style="left:27.6px;top:206.5px;font-size:6.3px;line-height:5.4px;color:#a8a8aa">2</div><div class="t" style="left:27.6px;top:211.8px;font-size:6.3px;line-height:5.4px;color:#a8a8aa">0</div><div class="t" style="left:27.6px;top:217.1px;font-size:6.3px;line-height:5.4px;color:#a8a8aa">0</div><div class="t" style="left:27.6px;top:227.4px;font-size:6.3px;line-height:5.4px;color:#a8a8aa">1</div><div class="t" style="left:27.6px;top:232.7px;font-size:6.3px;line-height:5.4px;color:#a8a8aa">5</div><div class="t" style="left:27.6px;top:238.0px;font-size:6.3px;line-height:5.4px;color:#a8a8aa">0</div><div class="t" style="left:27.6px;top:248.4px;font-size:6.3px;line-height:5.4px;color:#a8a8aa">1</div><div class="t" style="left:27.6px;top:253.7px;font-size:6.3px;line-height:5.4px;color:#a8a8aa">0</div><div class="t" style="left:27.6px;top:259.0px;font-size:6.3px;line-height:5.4px;color:#a8a8aa">0</div><div class="t" style="left:27.6px;top:269.3px;font-size:6.3px;line-height:5.4px;color:#a8a8aa">5</div><div class="t" style="left:27.6px;top:274.6px;font-size:6.3px;line-height:5.4px;color:#a8a8aa">0</div><div class="t" style="left:27.6px;top:290.3px;font-size:6.3px;line-height:5.4px;color:#a8a8aa">0</div><div class="t" style="left:27.6px;top:311.3px;font-size:6.3px;line-height:5.4px;color:#a8a8aa">5</div><div class="t" style="left:27.6px;top:316.6px;font-size:6.3px;line-height:5.4px;color:#a8a8aa">0</div><div class="t" style="left:27.6px;top:332.2px;font-size:6.3px;line-height:5.4px;color:#a8a8aa">1</div><div class="t" style="left:27.6px;top:337.5px;font-size:6.3px;line-height:5.4px;color:#a8a8aa">0</div><div class="t" style="left:27.6px;top:342.8px;font-size:6.3px;line-height:5.4px;color:#a8a8aa">0</div><div class="t" style="left:27.6px;top:353.2px;font-size:6.3px;line-height:5.4px;color:#a8a8aa">1</div><div class="t" style="left:27.6px;top:358.5px;font-size:6.3px;line-height:5.4px;color:#a8a8aa">5</div><div class="t" style="left:27.6px;top:363.8px;font-size:6.3px;line-height:5.4px;color:#a8a8aa">0</div><div class="t" style="left:27.6px;top:374.1px;font-size:6.3px;line-height:5.4px;color:#a8a8aa">2</div><div class="t" style="left:27.6px;top:379.4px;font-size:6.3px;line-height:5.4px;color:#a8a8aa">0</div><div class="t" style="left:27.6px;top:384.7px;font-size:6.3px;line-height:5.4px;color:#a8a8aa">0</div><div class="t" style="left:27.6px;top:395.1px;font-size:6.3px;line-height:5.4px;color:#a8a8aa">2</div><div class="t" style="left:27.6px;top:400.4px;font-size:6.3px;line-height:5.4px;color:#a8a8aa">5</div><div class="t" style="left:27.6px;top:405.7px;font-size:6.3px;line-height:5.4px;color:#a8a8aa">0</div><div class="t" style="left:27.6px;top:416.1px;font-size:6.3px;line-height:5.4px;color:#a8a8aa">3</div><div class="t" style="left:27.6px;top:421.4px;font-size:6.3px;line-height:5.4px;color:#a8a8aa">0</div><div class="t" style="left:27.6px;top:426.7px;font-size:6.3px;line-height:5.4px;color:#a8a8aa">0</div><div class="t" style="left:27.6px;top:437.0px;font-size:6.3px;line-height:5.4px;color:#a8a8aa">3</div><div class="t" style="left:27.6px;top:442.3px;font-size:6.3px;line-height:5.4px;color:#a8a8aa">5</div><div class="t" style="left:27.6px;top:447.6px;font-size:6.3px;line-height:5.4px;color:#a8a8aa">0</div><div class="t" style="left:27.6px;top:458.0px;font-size:6.3px;line-height:5.4px;color:#a8a8aa">4</div><div class="t" style="left:27.6px;top:463.3px;font-size:6.3px;line-height:5.4px;color:#a8a8aa">0</div><div class="t" style="left:27.6px;top:468.6px;font-size:6.3px;line-height:5.4px;color:#a8a8aa">0</div><div class="t" style="left:27.6px;top:478.9px;font-size:6.3px;line-height:5.4px;color:#a8a8aa">4</div><div class="t" style="left:27.6px;top:484.2px;font-size:6.3px;line-height:5.4px;color:#a8a8aa">5</div><div class="t" style="left:27.6px;top:489.5px;font-size:6.3px;line-height:5.4px;color:#a8a8aa">0</div><div class="t" style="left:27.6px;top:499.9px;font-size:6.3px;line-height:5.4px;color:#a8a8aa">5</div><div class="t" style="left:27.6px;top:505.2px;font-size:6.3px;line-height:5.4px;color:#a8a8aa">0</div><div class="t" style="left:27.6px;top:510.5px;font-size:6.3px;line-height:5.4px;color:#a8a8aa">0</div><div class="t" style="left:27.6px;top:520.9px;font-size:6.3px;line-height:5.4px;color:#a8a8aa">5</div><div class="t" style="left:27.6px;top:526.2px;font-size:6.3px;line-height:5.4px;color:#a8a8aa">5</div><div class="t" style="left:27.6px;top:531.5px;font-size:6.3px;line-height:5.4px;color:#a8a8aa">0</div><div class="t" style="left:27.6px;top:541.8px;font-size:6.3px;line-height:5.4px;color:#a8a8aa">6</div><div class="t" style="left:27.6px;top:547.1px;font-size:6.3px;line-height:5.4px;color:#a8a8aa">0</div><div class="t" style="left:27.6px;top:552.4px;font-size:6.3px;line-height:5.4px;color:#a8a8aa">0</div><div class="t" style="left:27.6px;top:562.8px;font-size:6.3px;line-height:5.4px;color:#a8a8aa">6</div><div class="t" style="left:27.6px;top:568.1px;font-size:6.3px;line-height:5.4px;color:#a8a8aa">5</div><div class="t" style="left:27.6px;top:573.4px;font-size:6.3px;line-height:5.4px;color:#a8a8aa">0</div><div class="t" style="left:27.6px;top:583.7px;font-size:6.3px;line-height:5.4px;color:#a8a8aa">7</div><div class="t" style="left:27.6px;top:589.0px;font-size:6.3px;line-height:5.4px;color:#a8a8aa">0</div><div class="t" style="left:27.6px;top:594.3px;font-size:6.3px;line-height:5.4px;color:#a8a8aa">0</div><div class="t" style="left:27.6px;top:604.7px;font-size:6.3px;line-height:5.4px;color:#a8a8aa">7</div><div class="t" style="left:27.6px;top:610.0px;font-size:6.3px;line-height:5.4px;color:#a8a8aa">5</div><div class="t" style="left:27.6px;top:615.3px;font-size:6.3px;line-height:5.4px;color:#a8a8aa">0</div><div class="t" style="left:27.6px;top:625.7px;font-size:6.3px;line-height:5.4px;color:#a8a8aa">8</div><div class="t" style="left:27.6px;top:631.0px;font-size:6.3px;line-height:5.4px;color:#a8a8aa">0</div><div class="t" style="left:27.6px;top:636.3px;font-size:6.3px;line-height:5.4px;color:#a8a8aa">0</div><div class="t" style="left:27.6px;top:646.6px;font-size:6.3px;line-height:5.4px;color:#a8a8aa">8</div><div class="t" style="left:27.6px;top:651.9px;font-size:6.3px;line-height:5.4px;color:#a8a8aa">5</div><div class="t" style="left:27.6px;top:657.2px;font-size:6.3px;line-height:5.4px;color:#a8a8aa">0</div><div class="t" style="left:27.6px;top:667.6px;font-size:6.3px;line-height:5.4px;color:#a8a8aa">9</div><div class="t" style="left:27.6px;top:672.9px;font-size:6.3px;line-height:5.4px;color:#a8a8aa">0</div><div class="t" style="left:27.6px;top:678.2px;font-size:6.3px;line-height:5.4px;color:#a8a8aa">0</div><div class="t" style="left:27.6px;top:688.5px;font-size:6.3px;line-height:5.4px;color:#a8a8aa">9</div><div class="t" style="left:27.6px;top:693.8px;font-size:6.3px;line-height:5.4px;color:#a8a8aa">5</div><div class="t" style="left:27.6px;top:699.1px;font-size:6.3px;line-height:5.4px;color:#a8a8aa">0</div><div class="t" style="left:27.6px;top:709.5px;font-size:6.3px;line-height:5.4px;color:#a8a8aa">1</div><div class="t" style="left:27.6px;top:714.8px;font-size:6.3px;line-height:5.4px;color:#a8a8aa">0</div><div class="t" style="left:27.6px;top:720.1px;font-size:6.3px;line-height:5.4px;color:#a8a8aa">0</div><div class="t" style="left:27.6px;top:725.4px;font-size:6.3px;line-height:5.4px;color:#a8a8aa">0</div><div class="t" style="left:27.6px;top:730.5px;font-size:6.3px;line-height:5.4px;color:#a8a8aa">1</div><div class="t" style="left:27.6px;top:735.8px;font-size:6.3px;line-height:5.4px;color:#a8a8aa">0</div><div class="t" style="left:27.6px;top:741.1px;font-size:6.3px;line-height:5.4px;color:#a8a8aa">5</div><div class="t" style="left:27.6px;top:746.4px;font-size:6.3px;line-height:5.4px;color:#a8a8aa">0</div><div class="b" style="left:2px;top:143px;width:23.2px;height:594px;background:#535355;"></div><div class="b" style="left:25.2px;top:164px;width:0.9px;height:573px;background:#5a5a5c;"></div><div class="b" style="left:2px;top:143px;width:23.2px;height:6px;background:#5c5c5e;"></div><div class="b" style="left:88px;top:289px;width:805px;height:349px;background:#fff;"></div><div class="b" style="left:25.2px;top:737px;width:967.8px;height:10px;background:#4a4a4c;"></div><div class="b" style="left:2px;top:737px;width:23.2px;height:10px;background:#535355;"></div><div class="t" style="left:28.6px;top:737.7px;font-size:7.20px;line-height:8.6px;color:#d8d8d8;transform:scaleX(0.999);transform-origin:0 50%;">66.67%</div><div class="t" style="left:80.0px;top:737.7px;font-size:7.20px;line-height:8.6px;color:#d8d8d8;transform:scaleX(0.985);transform-origin:0 50%;">文档:4.58M/116.3M</div><svg class="b" style="left:166px;top:739px;" width="4" height="6" viewBox="0 0 4 6"><path d="M0.7 0.7l2.3 2.3-2.3 2.3" stroke="#ccc" stroke-width="0.9" fill="none"/></svg><svg class="b" style="left:178px;top:739.5px;" width="3" height="5" viewBox="0 0 3 5"><path d="M2.3 0.5l-1.7 2 1.7 2" stroke="#8a8a8c" stroke-width="0.8" fill="none"/></svg><svg class="b" style="left:985px;top:739.5px;" width="3" height="5" viewBox="0 0 3 5"><path d="M0.7 0.5l1.7 2-1.7 2" stroke="#8a8a8c" stroke-width="0.8" fill="none"/></svg><div class="b" style="left:443px;top:738px;width:293px;height:9px;background:#68686a;"></div><div class="b" style="left:993px;top:152.5px;width:10.5px;height:584.5px;background:#4b4b4d;"></div><div class="b" style="left:1003.5px;top:143px;width:1.5px;height:604px;background:#39393b;"></div><svg class="b" style="left:994.8px;top:157.5px;" width="5.4" height="3.6" viewBox="0 0 5.4 3.6"><path d="M0.5 3l2.2-2.4 2.2 2.4" fill="none" stroke="#8a8a8c" stroke-width="0.8"/></svg><svg class="b" style="left:994.8px;top:727.5px;" width="5.4" height="3.6" viewBox="0 0 5.4 3.6"><path d="M0.5 0.5l2.2 2.4 2.2-2.4" fill="none" stroke="#8a8a8c" stroke-width="0.8"/></svg>
<div class="b" style="left:4.3px;top:153.2px;width:18.6px;height:14.4px;background:#38383a;border-radius:1px"></div><svg class="b" style="left:5.6px;top:153.3px;" width="16" height="16" viewBox="0 0 16 16"><g transform="translate(8 8) scale(0.8) translate(-8 -8)"><path d="M8 1.2l2 2.4h-1.4v3.8h3.8v-1.4l2.4 2-2.4 2v-1.4h-3.8v3.8h1.4l-2 2.4-2-2.4h1.4v-3.8h-3.8v1.4l-2.4-2 2.4-2v1.4h3.8v-3.8h-1.4z" fill="#e4e4e4"/></g></svg><svg class="b" style="left:19.3px;top:165.10000000000002px;" width="2.3" height="2.3" viewBox="0 0 2.3 2.3"><path d="M2.3 0v2.3h-2.3z" fill="#bcbcbc"/></svg><svg class="b" style="left:5.6px;top:168.3px;" width="16" height="16" viewBox="0 0 16 16"><g transform="translate(8 8) scale(0.8) translate(-8 -8)"><rect x="3" y="4" width="10" height="8" fill="none" stroke="#e4e4e4" stroke-width="1.1" stroke-dasharray="2 1.2"/></g></svg><svg class="b" style="left:19.3px;top:180.10000000000002px;" width="2.3" height="2.3" viewBox="0 0 2.3 2.3"><path d="M2.3 0v2.3h-2.3z" fill="#bcbcbc"/></svg><svg class="b" style="left:5.6px;top:184.6px;" width="16" height="16" viewBox="0 0 16 16"><g transform="translate(8 8) scale(0.8) translate(-8 -8)"><path d="M4.2 10.2c-2.2-1.2-1.6-4.2 1.4-5.4c3-1.2 6.6-0.2 6.8 2c0.2 2.2-3.2 4-6 3.6c-1.4-0.2-2.2 0.6-1.8 1.6c0.3 0.8 1 1 1.4 1.8" stroke="#e4e4e4" stroke-width="1.1" fill="none" stroke-linecap="round" stroke-linejoin="round" /></g></svg><svg class="b" style="left:19.3px;top:196.4px;" width="2.3" height="2.3" viewBox="0 0 2.3 2.3"><path d="M2.3 0v2.3h-2.3z" fill="#bcbcbc"/></svg><svg class="b" style="left:5.6px;top:201.70000000000002px;" width="16" height="16" viewBox="0 0 16 16"><g transform="translate(8 8) scale(0.8) translate(-8 -8)"><path d="M3 4.2h4.6M3 4.2v6.4h3.6" stroke="#bdbdbd" stroke-width="1" fill="none" stroke-linecap="round" stroke-linejoin="round" stroke-dasharray="1.6 1"/><path d="M12.8 3l1 1-4 5-1.6-1.4z" fill="#e4e4e4"/><path d="M7.6 8.2l1.6 1.4c-0.6 1.6-1.8 2-3 2c0.8-0.8 0.6-2.4 1.4-3.4z" fill="#e4e4e4"/></g></svg><svg class="b" style="left:19.3px;top:213.50000000000003px;" width="2.3" height="2.3" viewBox="0 0 2.3 2.3"><path d="M2.3 0v2.3h-2.3z" fill="#bcbcbc"/></svg><svg class="b" style="left:5.6px;top:217.2px;" width="16" height="16" viewBox="0 0 16 16"><g transform="translate(8 8) scale(0.8) translate(-8 -8)"><path d="M4.6 1.6v9.8h9.8M1.6 4.6h9.8v9.8" stroke="#e4e4e4" stroke-width="1.5" fill="none" stroke-linecap="round" stroke-linejoin="round" /></g></svg><svg class="b" style="left:19.3px;top:229.0px;" width="2.3" height="2.3" viewBox="0 0 2.3 2.3"><path d="M2.3 0v2.3h-2.3z" fill="#bcbcbc"/></svg><svg class="b" style="left:5.6px;top:234.3px;" width="16" height="16" viewBox="0 0 16 16"><g transform="translate(8 8) scale(0.8) translate(-8 -8)"><rect x="3" y="3.6" width="10" height="8.8" fill="none" stroke="#e4e4e4" stroke-width="1.2"/><path d="M3 3.6l10 8.8M13 3.6l-10 8.8" stroke="#e4e4e4" stroke-width="1" fill="none" stroke-linecap="round" stroke-linejoin="round" /></g></svg><svg class="b" style="left:5.6px;top:250.60000000000002px;" width="16" height="16" viewBox="0 0 16 16"><g transform="translate(8 8) scale(0.8) translate(-8 -8)"><path d="M13.6 2.4c0.9 0.9 0.6 1.8-0.2 2.6l-1.4 1.4 0.6 0.6-1 1-0.6-0.6-4.8 4.8c-0.6 0.6-1.6 0.4-2.2 1l-0.6-0.6c0.6-0.6 0.4-1.6 1-2.2l4.8-4.8-0.6-0.6 1-1 0.6 0.6 1.4-1.4c0.8-0.8 1.1-1.7 2-0.8z" fill="#e4e4e4"/><path d="M5.2 11l4.4-4.4" stroke="#535355" stroke-width="0.9"/></g></svg><svg class="b" style="left:19.3px;top:262.40000000000003px;" width="2.3" height="2.3" viewBox="0 0 2.3 2.3"><path d="M2.3 0v2.3h-2.3z" fill="#bcbcbc"/></svg><svg class="b" style="left:5.6px;top:266.90000000000003px;" width="16" height="16" viewBox="0 0 16 16"><g transform="translate(8 8) scale(0.8) translate(-8 -8)"><g transform="rotate(-40 8 8)"><rect x="1.8" y="5" width="12.4" height="6" rx="2" fill="#e4e4e4"/><rect x="6" y="5.8" width="4" height="4.4" fill="#535355"/><circle cx="7.2" cy="7.2" r="0.5" fill="#e4e4e4"/><circle cx="8.8" cy="7.2" r="0.5" fill="#e4e4e4"/><circle cx="7.2" cy="8.8" r="0.5" fill="#e4e4e4"/><circle cx="8.8" cy="8.8" r="0.5" fill="#e4e4e4"/></g></g></svg><svg class="b" style="left:19.3px;top:278.70000000000005px;" width="2.3" height="2.3" viewBox="0 0 2.3 2.3"><path d="M2.3 0v2.3h-2.3z" fill="#bcbcbc"/></svg><svg class="b" style="left:5.6px;top:283.20000000000005px;" width="16" height="16" viewBox="0 0 16 16"><g transform="translate(8 8) scale(0.8) translate(-8 -8)"><path d="M13.4 1.6c0.6 0.4 0.6 1 0.2 1.6l-5.2 6.4-1.6-1.2 5.2-6.4c0.4-0.6 0.9-0.7 1.4-0.4z" fill="#e4e4e4"/><path d="M6.2 9l1.6 1.2c-0.2 2-1.8 3.6-5 3.6c1.6-1.2 1.2-3.2 3.4-4.8z" fill="#e4e4e4"/></g></svg><svg class="b" style="left:19.3px;top:295.00000000000006px;" width="2.3" height="2.3" viewBox="0 0 2.3 2.3"><path d="M2.3 0v2.3h-2.3z" fill="#bcbcbc"/></svg><svg class="b" style="left:5.6px;top:299.5px;" width="16" height="16" viewBox="0 0 16 16"><g transform="translate(8 8) scale(0.8) translate(-8 -8)"><path d="M8 1.6c1.5 0 2.4 1 2.4 2.2c0 1.4-1 2-1 3.4c0 0.8 0.6 1 1.8 1.2c1.4 0.2 2.2 0.6 2.2 1.8v0.6h-10.8v-0.6c0-1.2 0.8-1.6 2.2-1.8c1.2-0.2 1.8-0.4 1.8-1.2c0-1.4-1-2-1-3.4c0-1.2 0.9-2.2 2.4-2.2z" fill="#e4e4e4"/><rect x="3" y="11.8" width="10" height="2" fill="#e4e4e4"/></g></svg><svg class="b" style="left:19.3px;top:311.3px;" width="2.3" height="2.3" viewBox="0 0 2.3 2.3"><path d="M2.3 0v2.3h-2.3z" fill="#bcbcbc"/></svg><svg class="b" style="left:5.6px;top:315.8px;" width="16" height="16" viewBox="0 0 16 16"><g transform="translate(8 8) scale(0.8) translate(-8 -8)"><path d="M14 1.4c0.6 0.4 0.6 1 0.2 1.6l-4.8 6.2-1.5-1.1 4.8-6.2c0.4-0.6 0.8-0.8 1.3-0.5z" fill="#e4e4e4"/><path d="M7.3 8.8l1.5 1.1c-0.2 1.9-1.6 3.3-4.6 3.5c1.4-1.2 1.1-3 3.1-4.6z" fill="#e4e4e4"/><path d="M2 6.4a3.4 3.4 0 0 1 5.4-2.4M7.6 2.2v2h-2" stroke="#e4e4e4" stroke-width="1" fill="none" stroke-linecap="round" stroke-linejoin="round" /></g></svg><svg class="b" style="left:19.3px;top:327.6px;" width="2.3" height="2.3" viewBox="0 0 2.3 2.3"><path d="M2.3 0v2.3h-2.3z" fill="#bcbcbc"/></svg><svg class="b" style="left:5.6px;top:332.1px;" width="16" height="16" viewBox="0 0 16 16"><g transform="translate(8 8) scale(0.8) translate(-8 -8)"><path d="M9.8 2.6l4.2 3.6-5.4 6.4h-3.4l-2.4-2z" fill="#e4e4e4"/><path d="M6.2 6.8l4.2 3.6" stroke="#535355" stroke-width="0.9"/><path d="M4.6 12.3l-1.8-1.6 3.4-4 4.2 3.6-2 2z" fill="#535355" stroke="#e4e4e4" stroke-width="0.9"/><path d="M3 14h10" stroke="#e4e4e4" stroke-width="1" fill="none" stroke-linecap="round" stroke-linejoin="round" /></g></svg><svg class="b" style="left:19.3px;top:343.90000000000003px;" width="2.3" height="2.3" viewBox="0 0 2.3 2.3"><path d="M2.3 0v2.3h-2.3z" fill="#bcbcbc"/></svg><svg class="b" style="left:5.6px;top:348.40000000000003px;" width="16" height="16" viewBox="0 0 16 16"><g transform="translate(8 8) scale(0.8) translate(-8 -8)"><defs><linearGradient id="tg"><stop offset="0" stop-color="#222"/><stop offset="1" stop-color="#e4e4e4"/></linearGradient></defs><rect x="2.6" y="3.6" width="10.8" height="8.8" fill="url(#tg)" stroke="#e4e4e4" stroke-width="1.1"/></g></svg><svg class="b" style="left:19.3px;top:360.20000000000005px;" width="2.3" height="2.3" viewBox="0 0 2.3 2.3"><path d="M2.3 0v2.3h-2.3z" fill="#bcbcbc"/></svg><svg class="b" style="left:5.6px;top:364.70000000000005px;" width="16" height="16" viewBox="0 0 16 16"><g transform="translate(8 8) scale(0.8) translate(-8 -8)"><path d="M8 1.8c2 3.2 4 5.4 4 8a4 4 0 0 1-8 0c0-2.6 2-4.8 4-8z" fill="#e4e4e4"/></g></svg><svg class="b" style="left:19.3px;top:376.50000000000006px;" width="2.3" height="2.3" viewBox="0 0 2.3 2.3"><path d="M2.3 0v2.3h-2.3z" fill="#bcbcbc"/></svg><svg class="b" style="left:5.6px;top:381.0px;" width="16" height="16" viewBox="0 0 16 16"><g transform="translate(8 8) scale(0.8) translate(-8 -8)"><circle cx="9.6" cy="6.2" r="3.9" fill="#e4e4e4"/><path d="M7 9.4l-4.6 5" stroke="#e4e4e4" stroke-width="1.8" fill="none" stroke-linecap="round" stroke-linejoin="round" /><circle cx="10.6" cy="5.2" r="1.2" fill="#535355"/></g></svg><svg class="b" style="left:19.3px;top:392.8px;" width="2.3" height="2.3" viewBox="0 0 2.3 2.3"><path d="M2.3 0v2.3h-2.3z" fill="#bcbcbc"/></svg><svg class="b" style="left:5.6px;top:397.3px;" width="16" height="16" viewBox="0 0 16 16"><g transform="translate(8 8) scale(0.8) translate(-8 -8)"><g transform="rotate(40 8 8)"><path d="M8 1.6c2.6 2.4 3.4 4.6 3 7.4l-1 2.4h-4l-1-2.4c-0.4-2.8 0.4-5 3-7.4zM8 2.4v5.4M6 11.6v2.4h4v-2.4" stroke="#e4e4e4" stroke-width="1.1" fill="none" stroke-linecap="round" stroke-linejoin="round" /><circle cx="8" cy="8.4" r="1" fill="#e4e4e4"/></g></g></svg><svg class="b" style="left:19.3px;top:409.1px;" width="2.3" height="2.3" viewBox="0 0 2.3 2.3"><path d="M2.3 0v2.3h-2.3z" fill="#bcbcbc"/></svg><svg class="b" style="left:5.6px;top:413.6px;" width="16" height="16" viewBox="0 0 16 16"><g transform="translate(8 8) scale(0.8) translate(-8 -8)"><path d="M3 2.6h10v3h-0.9c-0.2-1.2-0.7-1.8-2-1.8h-0.9v8.6c0 0.7 0.4 0.9 1.6 1v0.8h-5.6v-0.8c1.2-0.1 1.6-0.3 1.6-1v-8.6h-0.9c-1.3 0-1.8 0.6-2 1.8h-0.9z" fill="#e4e4e4"/></g></svg><svg class="b" style="left:19.3px;top:425.40000000000003px;" width="2.3" height="2.3" viewBox="0 0 2.3 2.3"><path d="M2.3 0v2.3h-2.3z" fill="#bcbcbc"/></svg><svg class="b" style="left:5.6px;top:429.90000000000003px;" width="16" height="16" viewBox="0 0 16 16"><g transform="translate(8 8) scale(0.8) translate(-8 -8)"><path d="M5 1.6l7.2 7-3.2 0.2 1.9 3.9-1.5 0.7-1.9-3.9-2.5 2.2z" fill="#111"/><path d="M5 1.6l7.2 7-3.2 0.2 1.9 3.9-1.5 0.7-1.9-3.9-2.5 2.2z" stroke="#e4e4e4" stroke-width="0.9" fill="none" stroke-linecap="round" stroke-linejoin="round" /></g></svg><svg class="b" style="left:19.3px;top:441.70000000000005px;" width="2.3" height="2.3" viewBox="0 0 2.3 2.3"><path d="M2.3 0v2.3h-2.3z" fill="#bcbcbc"/></svg><svg class="b" style="left:5.6px;top:446.20000000000005px;" width="16" height="16" viewBox="0 0 16 16"><g transform="translate(8 8) scale(0.8) translate(-8 -8)"><rect x="2.6" y="4" width="10.8" height="8" fill="#8e8e90" stroke="#d6d6d6" stroke-width="1"/></g></svg><svg class="b" style="left:19.3px;top:458.00000000000006px;" width="2.3" height="2.3" viewBox="0 0 2.3 2.3"><path d="M2.3 0v2.3h-2.3z" fill="#bcbcbc"/></svg><svg class="b" style="left:5.6px;top:462.5px;" width="16" height="16" viewBox="0 0 16 16"><g transform="translate(8 8) scale(0.8) translate(-8 -8)"><path d="M5 8.2v-3.6c0-1 1.4-1 1.4 0v-1.2c0-1 1.5-1 1.5 0v-0.4c0-1 1.5-1 1.5 0v0.8c0-1 1.5-1 1.5 0v3.6l0.8-1.4c0.6-0.9 1.8-0.3 1.3 0.7l-1.9 4.3c-0.6 1.4-1.5 2.4-3.4 2.4c-2.4 0-3.5-1.2-3.8-3l-0.5-2.4c-0.2-1 1-1.2 1.3-0.3z" fill="#e4e4e4"/></g></svg><svg class="b" style="left:19.3px;top:474.3px;" width="2.3" height="2.3" viewBox="0 0 2.3 2.3"><path d="M2.3 0v2.3h-2.3z" fill="#bcbcbc"/></svg><svg class="b" style="left:5.6px;top:478.8px;" width="16" height="16" viewBox="0 0 16 16"><g transform="translate(8 8) scale(0.8) translate(-8 -8)"><circle cx="6.8" cy="6.8" r="4.2" fill="none" stroke="#e4e4e4" stroke-width="1.5"/><path d="M9.9 9.9l4 4" stroke="#e4e4e4" stroke-width="2" fill="none" stroke-linecap="round" stroke-linejoin="round" /></g></svg><svg class="b" style="left:5.6px;top:495.1px;" width="16" height="16" viewBox="0 0 16 16"><g transform="translate(8 8) scale(0.8) translate(-8 -8)"><circle cx="3.6" cy="8" r="1.3" fill="#e4e4e4"/><circle cx="8" cy="8" r="1.3" fill="#e4e4e4"/><circle cx="12.4" cy="8" r="1.3" fill="#e4e4e4"/></g></svg><svg class="b" style="left:19.3px;top:506.90000000000003px;" width="2.3" height="2.3" viewBox="0 0 2.3 2.3"><path d="M2.3 0v2.3h-2.3z" fill="#bcbcbc"/></svg><svg class="b" style="left:4px;top:515px;" width="7" height="7" viewBox="0 0 7 7"><rect x="2.4" y="2.4" width="4.2" height="4.2" fill="#fff"/><rect x="0.4" y="0.4" width="4.2" height="4.2" fill="#111" stroke="#e4e4e4" stroke-width="0.8"/></svg><svg class="b" style="left:15px;top:515px;" width="7" height="7" viewBox="0 0 7 7"><path d="M1.2 1.6h4v4" fill="none" stroke="#e4e4e4" stroke-width="1"/><path d="M0 1.6l2-1.6v3.2zM5.2 7l-1.6-2h3.2z" fill="#e4e4e4"/></svg><div class="b" style="left:10.3px;top:532px;width:12px;height:11.4px;background:#fff;border:1px solid #2c2c2e;box-sizing:border-box"></div><div class="b" style="left:3.8px;top:526px;width:12.2px;height:11.4px;background:#47474a;border:1px solid #d8d8d8;box-sizing:border-box;outline:0.6px solid #2c2c2e"></div><svg class="b" style="left:8px;top:550.5px;" width="11.5" height="8.5" viewBox="0 0 11.5 8.5"><rect x="0.5" y="0.5" width="10.5" height="7.5" fill="none" stroke="#d4d4d4" stroke-width="1"/><circle cx="5.75" cy="4.25" r="2.2" fill="none" stroke="#d4d4d4" stroke-width="0.8" stroke-dasharray="1.2 0.8"/></svg><svg class="b" style="left:8px;top:566px;" width="12" height="10.5" viewBox="0 0 12 10.5"><rect x="0.5" y="3.5" width="7.5" height="6" fill="#535355" stroke="#d4d4d4" stroke-width="1"/><rect x="3.5" y="0.5" width="8" height="6.5" fill="#535355" stroke="#d4d4d4" stroke-width="1"/></svg><svg class="b" style="left:19.6px;top:576px;" width="2.3" height="2.3" viewBox="0 0 2.3 2.3"><path d="M2.3 0v2.3h-2.3z" fill="#bcbcbc"/></svg><svg class="b" style="left:11.5px;top:115.7px;" width="16" height="16" viewBox="0 0 16 16"><path d="M8 1.2l2 2.4h-1.4v3.8h3.8v-1.4l2.4 2-2.4 2v-1.4h-3.8v3.8h1.4l-2 2.4-2-2.4h1.4v-3.8h-3.8v1.4l-2.4-2 2.4-2v1.4h3.8v-3.8h-1.4z" fill="#f0f0f0"/></svg><svg class="b" style="left:30px;top:122px;" width="6" height="4" viewBox="0 0 6 4"><path d="M0.6 0.6l2.4 2.4 2.4-2.4" fill="none" stroke="#c8c8c8" stroke-width="0.9"/></svg><div class="b" style="left:41px;top:115px;width:0.8px;height:17px;background:#47474a;"></div><div class="b" style="left:45px;top:120.3px;width:7.4px;height:7px;background:#414143;border:0.8px solid #6c6c6e;box-sizing:border-box;border-radius:1px"></div><div class="t" style="left:56.0px;top:119.2px;font-size:7.60px;line-height:9.1px;color:#e6e6e6;transform:scaleX(1.030);transform-origin:0 50%;">自动选择:</div><div class="b" style="left:100.5px;top:118.6px;width:31.2px;height:10.6px;background:#3d3d3f;border-radius:1.5px"></div><div class="t" style="left:104.5px;top:119.2px;font-size:7.60px;line-height:9.1px;color:#e6e6e6;">图层</div><svg class="b" style="left:124px;top:122.3px;" width="5" height="3.4" viewBox="0 0 5 3.4"><path d="M0.5 0.5l2 2 2-2" fill="none" stroke="#c8c8c8" stroke-width="0.8"/></svg><div class="b" style="left:137px;top:115px;width:0.8px;height:17px;background:#47474a;"></div><div class="b" style="left:143.6px;top:120.3px;width:7.4px;height:7px;background:#414143;border:0.8px solid #6c6c6e;box-sizing:border-box;border-radius:1px"></div><div class="t" style="left:154.0px;top:119.2px;font-size:7.60px;line-height:9.1px;color:#e6e6e6;transform:scaleX(0.998);transform-origin:0 50%;">显示变换控件</div><div class="b" style="left:211px;top:115px;width:0.8px;height:17px;background:#47474a;"></div><svg class="b" style="left:219.5px;top:117.5px;" width="12" height="12" viewBox="0 0 12 12"><g transform="translate(6 6) scale(0.92) translate(-6 -6)"><rect x="1.5" y="1" width="1.3" height="10" fill="#e8e8e8"/><rect x="3.6" y="2.6" width="4.2" height="2.6" fill="#e8e8e8"/><rect x="3.6" y="6.8" width="7" height="2.6" fill="#e8e8e8"/></g></svg><svg class="b" style="left:236px;top:117.5px;" width="12" height="12" viewBox="0 0 12 12"><g transform="translate(6 6) scale(0.92) translate(-6 -6)"><rect x="5.4" y="1" width="1.2" height="10" fill="#e8e8e8"/><rect x="3.2" y="2.6" width="5.6" height="2.6" fill="#e8e8e8"/><rect x="1.6" y="6.8" width="8.8" height="2.6" fill="#e8e8e8"/></g></svg><svg class="b" style="left:250.5px;top:117.5px;" width="12" height="12" viewBox="0 0 12 12"><g transform="translate(6 6) scale(0.92) translate(-6 -6)"><rect x="9.2" y="1" width="1.3" height="10" fill="#e8e8e8"/><rect x="4.2" y="2.6" width="4.2" height="2.6" fill="#e8e8e8"/><rect x="1.4" y="6.8" width="7" height="2.6" fill="#e8e8e8"/></g></svg><svg class="b" style="left:272.5px;top:117.5px;" width="12" height="12" viewBox="0 0 12 12"><g transform="translate(6 6) scale(0.92) translate(-6 -6)"><rect x="1" y="1.4" width="10" height="1.2" fill="#e8e8e8"/><rect x="1" y="9.4" width="10" height="1.2" fill="#e8e8e8"/><rect x="2.6" y="4.6" width="6.8" height="2.8" fill="#e8e8e8"/></g></svg><div class="b" style="left:291px;top:115px;width:0.8px;height:17px;background:#47474a;"></div><svg class="b" style="left:299.5px;top:117.5px;" width="12" height="12" viewBox="0 0 12 12"><g transform="translate(6 6) scale(0.92) translate(-6 -6)"><rect x="1" y="1.5" width="10" height="1.3" fill="#e8e8e8"/><rect x="2.6" y="3.6" width="2.6" height="7" fill="#e8e8e8"/><rect x="6.8" y="3.6" width="2.6" height="4.2" fill="#e8e8e8"/></g></svg><svg class="b" style="left:316px;top:117.5px;" width="12" height="12" viewBox="0 0 12 12"><g transform="translate(6 6) scale(0.92) translate(-6 -6)"><rect x="1" y="5.4" width="10" height="1.2" fill="#e8e8e8"/><rect x="2.6" y="1.6" width="2.6" height="8.8" fill="#e8e8e8"/><rect x="6.8" y="3.2" width="2.6" height="5.6" fill="#e8e8e8"/></g></svg><svg class="b" style="left:333px;top:117.5px;" width="12" height="12" viewBox="0 0 12 12"><g transform="translate(6 6) scale(0.92) translate(-6 -6)"><rect x="1" y="9.2" width="10" height="1.3" fill="#e8e8e8"/><rect x="2.6" y="1.4" width="2.6" height="7" fill="#e8e8e8"/><rect x="6.8" y="4.2" width="2.6" height="4.2" fill="#e8e8e8"/></g></svg><svg class="b" style="left:354.5px;top:117.5px;" width="12" height="12" viewBox="0 0 12 12"><g transform="translate(6 6) scale(0.92) translate(-6 -6)"><rect x="1.4" y="1" width="1.2" height="10" fill="#e8e8e8"/><rect x="9.4" y="1" width="1.2" height="10" fill="#e8e8e8"/><rect x="4.6" y="2.6" width="2.8" height="6.8" fill="#e8e8e8"/></g></svg><div class="b" style="left:372px;top:115px;width:0.8px;height:17px;background:#47474a;"></div><svg class="b" style="left:380.5px;top:122px;" width="12" height="3" viewBox="0 0 12 3"><circle cx="1.6" cy="1.5" r="1.2" fill="#e8e8e8"/><circle cx="6" cy="1.5" r="1.2" fill="#e8e8e8"/><circle cx="10.4" cy="1.5" r="1.2" fill="#e8e8e8"/></svg><div class="b" style="left:400px;top:115px;width:0.8px;height:17px;background:#47474a;"></div><div class="t" style="left:405.8px;top:119.2px;font-size:7.60px;line-height:9.1px;color:#7c7c7e;transform:scaleX(0.985);transform-origin:0 50%;">3D 模式:</div><svg class="b" style="left:445px;top:117.6px;" width="13" height="12" viewBox="0 0 13 12"><path d="M2 7.5a4 3 0 0 1 8-1.4M10.6 3.6l-0.4 2.8-2.6-0.8" fill="none" stroke="#7e7e80" stroke-width="1"/><circle cx="6.4" cy="8" r="2.6" fill="none" stroke="#7e7e80" stroke-width="1"/></svg><svg class="b" style="left:461px;top:117.6px;" width="13" height="12" viewBox="0 0 13 12"><circle cx="6.5" cy="6" r="4.8" fill="none" stroke="#7e7e80" stroke-width="1"/><circle cx="6.5" cy="6" r="2.2" fill="none" stroke="#7e7e80" stroke-width="1"/></svg><svg class="b" style="left:477px;top:117.6px;" width="13" height="12" viewBox="0 0 13 12"><path d="M6.5 0.8l1.8 2h-1.2v2.6h2.6v-1.2l2 1.8-2 1.8v-1.2h-2.6v2.6h1.2l-1.8 2-1.8-2h1.2v-2.6h-2.6v1.2l-2-1.8 2-1.8v1.2h2.6v-2.6h-1.2z" fill="#7e7e80"/></svg><svg class="b" style="left:494px;top:117.6px;" width="13" height="12" viewBox="0 0 13 12"><path d="M6.5 0.6l1.6 2.2h-3.2zM6.5 11.4l1.6-2.2h-3.2zM0.8 6l2.2-1.6v3.2zM12.2 6l-2.2-1.6v3.2z" fill="#7e7e80"/><circle cx="6.5" cy="6" r="1.3" fill="#7e7e80"/></svg><svg class="b" style="left:510px;top:119.6px;" width="13" height="8" viewBox="0 0 13 8"><rect x="0.5" y="1.4" width="7" height="5" fill="#7e7e80"/><path d="M8.4 3l2.2-1.6v5.2l-2.2-1.6z" fill="#7e7e80"/><path d="M11.6 2v4" stroke="#7e7e80" stroke-width="0.9"/></svg><svg class="b" style="left:1145.4px;top:118.8px;" width="11" height="11" viewBox="0 0 11 11"><circle cx="4.4" cy="4.4" r="3.6" fill="none" stroke="#e6e6e6" stroke-width="1.2"/><path d="M7 7l3.2 3.2" stroke="#e6e6e6" stroke-width="1.4"/></svg><svg class="b" style="left:1163.6px;top:119.2px;" width="12" height="9.5" viewBox="0 0 12 9.5"><rect x="0.6" y="0.6" width="10.8" height="8.3" fill="none" stroke="#e6e6e6" stroke-width="1.1"/><rect x="1.6" y="1.6" width="2.8" height="6.3" fill="#e6e6e6"/></svg><svg class="b" style="left:1180.5px;top:121px;" width="5" height="3.4" viewBox="0 0 5 3.4"><path d="M0.5 0.5l2 2 2-2" fill="none" stroke="#a8a8a8" stroke-width="0.8"/></svg><svg class="b" style="left:1191px;top:118px;" width="3" height="10" viewBox="0 0 3 10"><path d="M0.6 2.5h3v7h-3z" fill="#e6e6e6"/></svg>
<div class="b" style="left:1005px;top:134px;width:189px;height:9px;background:#434345;"></div><svg class="b" style="left:1019.5px;top:136.3px;" width="5.5" height="4" viewBox="0 0 5.5 4"><path d="M2.2 0.4l-1.6 1.6 1.6 1.6M4.8 0.4l-1.6 1.6 1.6 1.6" stroke="#ddd" stroke-width="0.9" fill="none"/></svg><div class="b" style="left:1005px;top:143px;width:23.2px;height:604px;background:#515153;"></div><div class="b" style="left:1005.5px;top:143px;width:22.7px;height:24.3px;background:#535355;"></div><div class="b" style="left:1005.5px;top:168.8px;width:22.7px;height:42.5px;background:#535355;"></div><div class="b" style="left:1028.2px;top:143px;width:1.6px;height:604px;background:#414143;"></div><svg class="b" style="left:1010.5px;top:150.5px;" width="13" height="13" viewBox="0 0 13 13"><rect x="1.3" y="1" width="3" height="2.6" fill="none" stroke="#e6e6e6" stroke-width="0.8"/><rect x="1.3" y="4.8" width="3" height="2.6" fill="none" stroke="#e6e6e6" stroke-width="0.8"/><rect x="1" y="8.6" width="3.6" height="3.2" fill="#e6e6e6"/><path d="M7 2.2c3.4-0.4 4.6 3 3.4 5.2c-0.6 1.2-1.6 2-3 2.4" fill="none" stroke="#e6e6e6" stroke-width="1.5"/><path d="M5.6 2.2l2.6-1.8v3.6z" fill="#e6e6e6"/></svg><div class="b" style="left:1008.5px;top:176px;width:15.5px;height:13px;background:#38383a;"></div><svg class="b" style="left:1010.5px;top:177.5px;" width="12" height="10.5" viewBox="0 0 12 10.5"><path d="M0.8 9.6l3.4-8.6h0.9l3.4 8.6M2 6.8h5.3" fill="none" stroke="#f2f2f2" stroke-width="1.15"/><path d="M10.4 0.6v9.6" stroke="#f2f2f2" stroke-width="1"/></svg><svg class="b" style="left:1012.5px;top:194.5px;" width="10" height="11" viewBox="0 0 10 11"><path d="M5.4 0.6h3.8v9.8h-1.6v-4.4h-1c-4.4 0.2-4.6-5.2-1.2-5.4z" fill="#e6e6e6"/><rect x="6.4" y="1.8" width="1" height="8" fill="#535355"/></svg><div class="b" style="left:1029.8px;top:143px;width:164.2px;height:107.5px;background:#535355;"></div><div class="b" style="left:1057px;top:143px;width:137px;height:17px;background:#444446;"></div><div class="t" style="left:1035.9px;top:146.8px;font-size:7.40px;line-height:8.9px;color:#f0f0f0;">颜色</div><div class="t" style="left:1063.2px;top:146.8px;font-size:7.40px;line-height:8.9px;color:#9e9ea0;">色板</div><div class="b" style="left:1042px;top:172.6px;width:12px;height:12.4px;background:#fff;outline:0.7px solid #2e2e30"></div><div class="b" style="left:1036px;top:167px;width:11.6px;height:11px;background:#47474a;border:1px solid #d6d6d6;box-sizing:border-box;outline:0.7px solid #2e2e30"></div><div class="b" style="left:1058px;top:164.2px;width:117.6px;height:72.6px;background:linear-gradient(to bottom,rgba(0,0,0,0),#000),linear-gradient(to right,#fff,#d4041d)"></div><div class="b" style="left:1185.6px;top:164.2px;width:8.4px;height:72.6px;background:linear-gradient(to bottom,#f00 0%,#f0f 17%,#00f 33%,#0ff 50%,#0f0 67%,#ff0 83%,#f00 100%)"></div><svg class="b" style="left:1055.5px;top:214.5px;" width="7" height="7" viewBox="0 0 7 7"><circle cx="3.5" cy="3.5" r="2.6" fill="none" stroke="#e8e8e8" stroke-width="0.8"/></svg><svg class="b" style="left:1179.5px;top:233px;" width="5" height="6.4" viewBox="0 0 5 6.4"><path d="M0.3 0.3l4.4 2.9-4.4 2.9z" fill="#f4f4f4"/></svg><div class="b" style="left:1029.8px;top:250.5px;width:164.2px;height:2px;background:#424244;"></div><div class="b" style="left:1029.8px;top:252.3px;width:164.2px;height:154.7px;background:#535355;"></div><div class="b" style="left:1057px;top:252.3px;width:137px;height:16.7px;background:#444446;"></div><div class="t" style="left:1035.9px;top:256.1px;font-size:7.40px;line-height:8.9px;color:#f0f0f0;">属性</div><div class="t" style="left:1063.5px;top:256.1px;font-size:7.40px;line-height:8.9px;color:#9e9ea0;">调整</div><div class="b" style="left:1037.5px;top:273.5px;width:11.5px;height:13px;background:#38383a;"></div><svg class="b" style="left:1039px;top:276.5px;" width="8.6" height="7" viewBox="0 0 8.6 7"><rect x="0.4" y="0.4" width="7.8" height="6.2" fill="none" stroke="#e6e6e6" stroke-width="0.8"/><path d="M1 6l2-2.6 1.6 1.6 1-1 2 2z" fill="#e6e6e6"/><circle cx="6" cy="2.2" r="0.7" fill="#e6e6e6"/></svg><div class="t" style="left:1055.0px;top:276.5px;font-size:7.50px;line-height:9.0px;color:#e4e4e4;transform:scaleX(0.989);transform-origin:0 50%;">像素图层属性</div><div class="b" style="left:1031px;top:289.6px;width:163px;height:0.9px;background:#464648;"></div><div class="b" style="left:1049.6px;top:297px;width:34.40000000000009px;height:12.2px;background:#434345;border-radius:1px"></div><div class="t" style="left:1035.5px;top:299.0px;font-size:7.20px;line-height:8.6px;color:#c4c4c6;">W:</div><div class="t" style="left:1051.2px;top:298.8px;font-size:7.50px;line-height:9.0px;color:#e8e8e8;transform:scaleX(0.953);transform-origin:0 50%;">297 像素</div><div class="b" style="left:1124px;top:297px;width:34px;height:12.2px;background:#434345;border-radius:1px"></div><div class="t" style="left:1111.8px;top:299.0px;font-size:7.20px;line-height:8.6px;color:#c4c4c6;">H:</div><div class="t" style="left:1125.6px;top:298.8px;font-size:7.50px;line-height:9.0px;color:#e8e8e8;transform:scaleX(0.939);transform-origin:0 50%;">422 像素</div><div class="b" style="left:1049.6px;top:317px;width:34.40000000000009px;height:12.2px;background:#434345;border-radius:1px"></div><div class="t" style="left:1038.5px;top:319.0px;font-size:7.20px;line-height:8.6px;color:#c4c4c6;">X:</div><div class="t" style="left:1051.2px;top:318.8px;font-size:7.50px;line-height:9.0px;color:#e8e8e8;transform:scaleX(0.953);transform-origin:0 50%;">849 像素</div><div class="b" style="left:1124px;top:317px;width:34px;height:12.2px;background:#434345;border-radius:1px"></div><div class="t" style="left:1113.0px;top:319.0px;font-size:7.20px;line-height:8.6px;color:#c4c4c6;">Y:</div><div class="t" style="left:1125.6px;top:318.8px;font-size:7.50px;line-height:9.0px;color:#e8e8e8;transform:scaleX(0.939);transform-origin:0 50%;">316 像素</div><div class="b" style="left:1091px;top:296px;width:14.6px;height:15px;background:#38383a;"></div><svg class="b" style="left:1094px;top:301px;" width="8.6" height="5" viewBox="0 0 8.6 5"><rect x="0.5" y="0.8" width="4" height="3.4" rx="1.7" fill="none" stroke="#e0e0e0" stroke-width="0.9"/><rect x="4.1" y="0.8" width="4" height="3.4" rx="1.7" fill="none" stroke="#e0e0e0" stroke-width="0.9"/><path d="M2.6 2.5h3.4" stroke="#e0e0e0" stroke-width="0.9"/></svg><div class="b" style="left:1029.8px;top:405.2px;width:164.2px;height:2px;background:#424244;"></div><div class="b" style="left:1029.8px;top:407px;width:164.2px;height:340px;background:#535355;"></div><div class="b" style="left:1057.2px;top:407px;width:137px;height:17.5px;background:#444446;"></div><div class="t" style="left:1035.9px;top:411.6px;font-size:7.40px;line-height:8.9px;color:#f0f0f0;">图层</div><div class="t" style="left:1063.8px;top:411.6px;font-size:7.40px;line-height:8.9px;color:#9e9ea0;">通道</div><div class="t" style="left:1091.5px;top:411.6px;font-size:7.40px;line-height:8.9px;color:#9e9ea0;">路径</div><div class="b" style="left:1032px;top:431px;width:54px;height:13px;background:#434345;border-radius:1px"></div><svg class="b" style="left:1036.5px;top:434px;" width="7" height="7" viewBox="0 0 7 7"><circle cx="2.8" cy="2.8" r="2.1" fill="none" stroke="#e8e8e8" stroke-width="1.1"/><path d="M4.4 4.4l2.2 2.2" stroke="#e8e8e8" stroke-width="1.2"/></svg><div class="t" style="left:1046.5px;top:433.2px;font-size:7.40px;line-height:8.9px;color:#e6e6e6;">类型</div><svg class="b" style="left:1078.5px;top:435.8px;" width="5.5" height="3.6" viewBox="0 0 5.5 3.6"><path d="M0.5 0.5l2.2 2.4 2.2-2.4" fill="none" stroke="#a8a8a8" stroke-width="0.8"/></svg><svg class="b" style="left:1096px;top:433.5px;" width="8.5" height="7" viewBox="0 0 8.5 7"><rect x="0.5" y="0.5" width="7.5" height="6" fill="none" stroke="#e0e0e0" stroke-width="0.9"/><path d="M1.4 5.6l1.6-2 1.2 1.2 1-1 1.6 1.8z" fill="#e0e0e0"/></svg><svg class="b" style="left:1111.5px;top:433.5px;" width="7.5" height="7.5" viewBox="0 0 7.5 7.5"><circle cx="3.75" cy="3.75" r="3.2" fill="none" stroke="#e0e0e0" stroke-width="0.9"/><path d="M3.75 0.55a3.2 3.2 0 0 0 0 6.4z" fill="#e0e0e0" transform="rotate(45 3.75 3.75)"/></svg><div class="t" style="left:1128px;top:433px;font-size:8.6px;line-height:10px;color:#e6e6e6;font-weight:bold;font-family:'Liberation Serif',serif">T</div><svg class="b" style="left:1141.5px;top:433.2px;" width="8" height="8" viewBox="0 0 8 8"><rect x="1.4" y="1.4" width="5.2" height="5.2" fill="none" stroke="#e0e0e0" stroke-width="0.9"/><rect x="0.3" y="0.3" width="2" height="2" fill="#e0e0e0"/><rect x="5.7" y="0.3" width="2" height="2" fill="#e0e0e0"/><rect x="0.3" y="5.7" width="2" height="2" fill="#e0e0e0"/><rect x="5.7" y="5.7" width="2" height="2" fill="#e0e0e0"/></svg><div class="b" style="left:1032px;top:449px;width:73.2px;height:13px;background:#434345;border-radius:1px"></div><div class="t" style="left:1038.0px;top:451.2px;font-size:7.60px;line-height:9.1px;color:#e6e6e6;">滤色</div><svg class="b" style="left:1097px;top:454.0px;" width="5.5" height="3.6" viewBox="0 0 5.5 3.6"><path d="M0.5 0.5l2.2 2.4 2.2-2.4" fill="none" stroke="#a8a8a8" stroke-width="0.8"/></svg><div class="t" style="left:1110.0px;top:451.2px;font-size:7.60px;line-height:9.1px;color:#e0e0e0;transform:scaleX(1.030);transform-origin:0 50%;">不透明度:</div><div class="b" style="left:1146px;top:449px;width:40px;height:13px;background:#434345;"></div><div class="t" style="left:1148.0px;top:451.4px;font-size:7.40px;line-height:8.9px;color:#e6e6e6;">50%</div><div class="t" style="left:1034.0px;top:468.4px;font-size:7.60px;line-height:9.1px;color:#e0e0e0;transform:scaleX(1.069);transform-origin:0 50%;">锁定:</div><svg class="b" style="left:1057px;top:469.2px;" width="7.4" height="7.4" viewBox="0 0 7.4 7.4"><rect x="0.3" y="0.3" width="6.8" height="6.8" fill="#e6e6e6"/><rect x="0.9" y="0.9" width="1.9" height="1.9" fill="#535355"/><rect x="4.6" y="0.9" width="1.9" height="1.9" fill="#535355"/><rect x="2.75" y="2.75" width="1.9" height="1.9" fill="#535355"/><rect x="0.9" y="4.6" width="1.9" height="1.9" fill="#535355"/><rect x="4.6" y="4.6" width="1.9" height="1.9" fill="#535355"/></svg><svg class="b" style="left:1070px;top:468.2px;" width="10" height="10" viewBox="0 0 10 10"><path d="M8.6 0.5c0.9 0.6 0.8 1.3 0.3 1.9l-3.7 4.4-1.7-1.4 3.7-4.4c0.4-0.6 0.8-0.9 1.4-0.5z" fill="#e6e6e6"/><path d="M3 5.9l1.7 1.4c-0.3 1.7-1.6 2.5-4.1 2.5c1.2-0.9 1-2.6 2.4-3.9z" fill="#e6e6e6"/></svg><svg class="b" style="left:1084.5px;top:468.6px;" width="9" height="9" viewBox="0 0 9 9"><path d="M4.5 0.3l1.4 1.6h-0.9v2.1h2.1v-0.9l1.6 1.4-1.6 1.4v-0.9h-2.1v2.1h0.9l-1.4 1.6-1.4-1.6h0.9v-2.1h-2.1v0.9l-1.6-1.4 1.6-1.4v0.9h2.1v-2.1h-0.9z" fill="#e6e6e6"/></svg><svg class="b" style="left:1097.5px;top:468.6px;" width="10" height="9" viewBox="0 0 10 9"><path d="M2.2 0.4v6.6h7.2M0.4 2.2h7v6.4" fill="none" stroke="#e6e6e6" stroke-width="1"/><path d="M6.4 1l2.6-0.8-0.8 2.6z" fill="#e6e6e6"/></svg><svg class="b" style="left:1112.8px;top:468.4px;" width="7.4" height="9" viewBox="0 0 7.4 9"><rect x="0.4" y="3.8" width="6.6" height="4.8" rx="0.6" fill="#e6e6e6"/><path d="M1.8 3.8v-1.2a1.9 1.9 0 0 1 3.8 0v1.2" fill="none" stroke="#e6e6e6" stroke-width="1"/><rect x="3.2" y="5.4" width="1" height="1.8" fill="#535355"/></svg><div class="t" style="left:1125.0px;top:468.4px;font-size:7.60px;line-height:9.1px;color:#e0e0e0;transform:scaleX(1.069);transform-origin:0 50%;">填充:</div><div class="b" style="left:1146px;top:466.5px;width:40px;height:13px;background:#434345;"></div><div class="t" style="left:1148.0px;top:468.6px;font-size:7.40px;line-height:8.9px;color:#e6e6e6;">100%</div><div class="b" style="left:1030px;top:481.6px;width:164px;height:0.8px;background:#48484a;"></div><div class="b" style="left:1030px;top:499.75000000000006px;width:164px;height:0.7px;background:#4a4a4c;"></div><svg class="b" style="left:1035px;top:488.8px;" width="10" height="7" viewBox="0 0 10 7"><path d="M0.4 3.5c2.4-4 6.8-4 9.2 0c-2.4 4-6.8 4-9.2 0z" fill="#e8e8e8"/><circle cx="5" cy="3.5" r="1.7" fill="#535355"/><circle cx="5" cy="3.5" r="0.8" fill="#e8e8e8"/></svg><svg class="b" style="left:1053px;top:489.5px;" width="3.6" height="5.6" viewBox="0 0 3.6 5.6"><path d="M0.5 0.5l2.4 2.3-2.4 2.3" fill="none" stroke="#a8a8a8" stroke-width="0.8"/></svg><svg class="b" style="left:1060.5px;top:488.8px;" width="9" height="7.5" viewBox="0 0 9 7.5"><path d="M0.3 0.6h3l0.8 1h4.6v5.6h-8.4z" fill="#e2e2e2"/></svg><div class="t" style="left:1075.8px;top:488.0px;font-size:7.60px;line-height:9.1px;color:#e4e4e4;">组 10</div><div class="b" style="left:1030px;top:515.45px;width:164px;height:0.7px;background:#4a4a4c;"></div><svg class="b" style="left:1035px;top:504.5px;" width="10" height="7" viewBox="0 0 10 7"><path d="M0.4 3.5c2.4-4 6.8-4 9.2 0c-2.4 4-6.8 4-9.2 0z" fill="#e8e8e8"/><circle cx="5" cy="3.5" r="1.7" fill="#535355"/><circle cx="5" cy="3.5" r="0.8" fill="#e8e8e8"/></svg><svg class="b" style="left:1051.4px;top:503.3px;outline:0.6px solid #2e2e30" width="11" height="9.4" viewBox="0 0 11 9.4"><rect x="0" y="0" width="11" height="9.4" fill="#fff"/><rect x="2.4" y="0.0" width="2.4" height="2.4" fill="#d4d4d4"/><rect x="7.2" y="0.0" width="2.4" height="2.4" fill="#d4d4d4"/><rect x="0.0" y="2.4" width="2.4" height="2.4" fill="#d4d4d4"/><rect x="4.8" y="2.4" width="2.4" height="2.4" fill="#d4d4d4"/><rect x="9.6" y="2.4" width="2.4" height="2.4" fill="#d4d4d4"/><rect x="2.4" y="4.8" width="2.4" height="2.4" fill="#d4d4d4"/><rect x="7.2" y="4.8" width="2.4" height="2.4" fill="#d4d4d4"/><rect x="0.0" y="7.2" width="2.4" height="2.4" fill="#d4d4d4"/><rect x="4.8" y="7.2" width="2.4" height="2.4" fill="#d4d4d4"/><rect x="9.6" y="7.2" width="2.4" height="2.4" fill="#d4d4d4"/></svg><svg class="b" style="left:1063.2px;top:504.8px;" width="7" height="8" viewBox="0 0 7 8"><rect x="0.3" y="0.3" width="6.4" height="7.4" fill="#3a3a3c"/><path d="M1.2 6.8v-3.2h2v-2.2h2.4v5.4z" fill="#ececec"/></svg><div class="t" style="left:1077.5px;top:503.7px;font-size:7.60px;line-height:9.1px;color:#e4e4e4;">组 9</div><div class="b" style="left:1030px;top:531.1500000000001px;width:164px;height:0.7px;background:#4a4a4c;"></div><svg class="b" style="left:1035px;top:520.2px;" width="10" height="7" viewBox="0 0 10 7"><path d="M0.4 3.5c2.4-4 6.8-4 9.2 0c-2.4 4-6.8 4-9.2 0z" fill="#e8e8e8"/><circle cx="5" cy="3.5" r="1.7" fill="#535355"/><circle cx="5" cy="3.5" r="0.8" fill="#e8e8e8"/></svg><svg class="b" style="left:1051.4px;top:519.0px;outline:0.6px solid #2e2e30" width="11" height="9.4" viewBox="0 0 11 9.4"><rect x="0" y="0" width="11" height="9.4" fill="#fff"/><rect x="2.4" y="0.0" width="2.4" height="2.4" fill="#d4d4d4"/><rect x="7.2" y="0.0" width="2.4" height="2.4" fill="#d4d4d4"/><rect x="0.0" y="2.4" width="2.4" height="2.4" fill="#d4d4d4"/><rect x="4.8" y="2.4" width="2.4" height="2.4" fill="#d4d4d4"/><rect x="9.6" y="2.4" width="2.4" height="2.4" fill="#d4d4d4"/><rect x="2.4" y="4.8" width="2.4" height="2.4" fill="#d4d4d4"/><rect x="7.2" y="4.8" width="2.4" height="2.4" fill="#d4d4d4"/><rect x="0.0" y="7.2" width="2.4" height="2.4" fill="#d4d4d4"/><rect x="4.8" y="7.2" width="2.4" height="2.4" fill="#d4d4d4"/><rect x="9.6" y="7.2" width="2.4" height="2.4" fill="#d4d4d4"/></svg><svg class="b" style="left:1063.2px;top:520.5px;" width="7" height="8" viewBox="0 0 7 8"><rect x="0.3" y="0.3" width="6.4" height="7.4" fill="#3a3a3c"/><path d="M1.2 6.8v-3.2h2v-2.2h2.4v5.4z" fill="#ececec"/></svg><div class="t" style="left:1077.5px;top:519.4px;font-size:7.60px;line-height:9.1px;color:#e4e4e4;">组 3</div><div class="b" style="left:1030px;top:546.85px;width:164px;height:0.7px;background:#4a4a4c;"></div><svg class="b" style="left:1035px;top:535.9px;" width="10" height="7" viewBox="0 0 10 7"><path d="M0.4 3.5c2.4-4 6.8-4 9.2 0c-2.4 4-6.8 4-9.2 0z" fill="#e8e8e8"/><circle cx="5" cy="3.5" r="1.7" fill="#535355"/><circle cx="5" cy="3.5" r="0.8" fill="#e8e8e8"/></svg><svg class="b" style="left:1052.5px;top:537.6px;" width="5.5" height="3.6" viewBox="0 0 5.5 3.6"><path d="M0.5 0.5l2.2 2.4 2.2-2.4" fill="none" stroke="#a8a8a8" stroke-width="0.8"/></svg><svg class="b" style="left:1060.5px;top:535.9px;" width="9" height="7.5" viewBox="0 0 9 7.5"><path d="M0.3 0.6h3l0.8 1h4.6v5.6h-8.4z" fill="#e2e2e2"/><path d="M0.3 7.2l1.4-3.6h7.2l-1.4 3.6z" fill="#f2f2f2" stroke="#535355" stroke-width="0.4"/></svg><div class="t" style="left:1075.8px;top:535.1px;font-size:7.60px;line-height:9.1px;color:#e4e4e4;">花盆</div><div class="b" style="left:1030px;top:562.5500000000001px;width:164px;height:0.7px;background:#4a4a4c;"></div><svg class="b" style="left:1035px;top:551.6px;" width="10" height="7" viewBox="0 0 10 7"><path d="M0.4 3.5c2.4-4 6.8-4 9.2 0c-2.4 4-6.8 4-9.2 0z" fill="#e8e8e8"/><circle cx="5" cy="3.5" r="1.7" fill="#535355"/><circle cx="5" cy="3.5" r="0.8" fill="#e8e8e8"/></svg><svg class="b" style="left:1062.5px;top:553.3000000000001px;" width="5.5" height="3.6" viewBox="0 0 5.5 3.6"><path d="M0.5 0.5l2.2 2.4 2.2-2.4" fill="none" stroke="#a8a8a8" stroke-width="0.8"/></svg><svg class="b" style="left:1070.5px;top:551.6px;" width="9" height="7.5" viewBox="0 0 9 7.5"><path d="M0.3 0.6h3l0.8 1h4.6v5.6h-8.4z" fill="#e2e2e2"/><path d="M0.3 7.2l1.4-3.6h7.2l-1.4 3.6z" fill="#f2f2f2" stroke="#535355" stroke-width="0.4"/></svg><div class="t" style="left:1085.8px;top:550.8px;font-size:7.60px;line-height:9.1px;color:#e4e4e4;">组 11</div><div class="b" style="left:1049px;top:563px;width:145px;height:15px;background:#69696b;"></div><svg class="b" style="left:1035px;top:567.3px;" width="10" height="7" viewBox="0 0 10 7"><path d="M0.4 3.5c2.4-4 6.8-4 9.2 0c-2.4 4-6.8 4-9.2 0z" fill="#e8e8e8"/><circle cx="5" cy="3.5" r="1.7" fill="#535355"/><circle cx="5" cy="3.5" r="0.8" fill="#e8e8e8"/></svg><svg class="b" style="left:1072px;top:566.0999999999999px;outline:0.6px solid #2e2e30" width="19" height="9.5" viewBox="0 0 19 9.5"><rect x="0" y="0" width="19" height="9.5" fill="#fff"/><rect x="2.4" y="0.0" width="2.4" height="2.4" fill="#d4d4d4"/><rect x="7.2" y="0.0" width="2.4" height="2.4" fill="#d4d4d4"/><rect x="12.0" y="0.0" width="2.4" height="2.4" fill="#d4d4d4"/><rect x="16.8" y="0.0" width="2.4" height="2.4" fill="#d4d4d4"/><rect x="0.0" y="2.4" width="2.4" height="2.4" fill="#d4d4d4"/><rect x="4.8" y="2.4" width="2.4" height="2.4" fill="#d4d4d4"/><rect x="9.6" y="2.4" width="2.4" height="2.4" fill="#d4d4d4"/><rect x="14.4" y="2.4" width="2.4" height="2.4" fill="#d4d4d4"/><rect x="2.4" y="4.8" width="2.4" height="2.4" fill="#d4d4d4"/><rect x="7.2" y="4.8" width="2.4" height="2.4" fill="#d4d4d4"/><rect x="12.0" y="4.8" width="2.4" height="2.4" fill="#d4d4d4"/><rect x="16.8" y="4.8" width="2.4" height="2.4" fill="#d4d4d4"/><rect x="0.0" y="7.2" width="2.4" height="2.4" fill="#d4d4d4"/><rect x="4.8" y="7.2" width="2.4" height="2.4" fill="#d4d4d4"/><rect x="9.6" y="7.2" width="2.4" height="2.4" fill="#d4d4d4"/><rect x="14.4" y="7.2" width="2.4" height="2.4" fill="#d4d4d4"/></svg><div class="t" style="left:1097.5px;top:566.5px;font-size:7.60px;line-height:9.1px;color:#e8e8e8;">图层 12</div><div class="b" style="left:1049px;top:579px;width:145px;height:15px;background:#69696b;"></div><svg class="b" style="left:1035px;top:583.0px;" width="10" height="7" viewBox="0 0 10 7"><path d="M0.4 3.5c2.4-4 6.8-4 9.2 0c-2.4 4-6.8 4-9.2 0z" fill="#e8e8e8"/><circle cx="5" cy="3.5" r="1.7" fill="#535355"/><circle cx="5" cy="3.5" r="0.8" fill="#e8e8e8"/></svg><svg class="b" style="left:1072px;top:581.8px;outline:0.6px solid #2e2e30" width="19" height="9.5" viewBox="0 0 19 9.5"><rect x="0" y="0" width="19" height="9.5" fill="#fff"/><rect x="2.4" y="0.0" width="2.4" height="2.4" fill="#d4d4d4"/><rect x="7.2" y="0.0" width="2.4" height="2.4" fill="#d4d4d4"/><rect x="12.0" y="0.0" width="2.4" height="2.4" fill="#d4d4d4"/><rect x="16.8" y="0.0" width="2.4" height="2.4" fill="#d4d4d4"/><rect x="0.0" y="2.4" width="2.4" height="2.4" fill="#d4d4d4"/><rect x="4.8" y="2.4" width="2.4" height="2.4" fill="#d4d4d4"/><rect x="9.6" y="2.4" width="2.4" height="2.4" fill="#d4d4d4"/><rect x="14.4" y="2.4" width="2.4" height="2.4" fill="#d4d4d4"/><rect x="2.4" y="4.8" width="2.4" height="2.4" fill="#d4d4d4"/><rect x="7.2" y="4.8" width="2.4" height="2.4" fill="#d4d4d4"/><rect x="12.0" y="4.8" width="2.4" height="2.4" fill="#d4d4d4"/><rect x="16.8" y="4.8" width="2.4" height="2.4" fill="#d4d4d4"/><rect x="0.0" y="7.2" width="2.4" height="2.4" fill="#d4d4d4"/><rect x="4.8" y="7.2" width="2.4" height="2.4" fill="#d4d4d4"/><rect x="9.6" y="7.2" width="2.4" height="2.4" fill="#d4d4d4"/><rect x="14.4" y="7.2" width="2.4" height="2.4" fill="#d4d4d4"/></svg><div class="t" style="left:1097.5px;top:582.2px;font-size:7.60px;line-height:9.1px;color:#e8e8e8;">图层 5</div><div class="b" style="left:1049px;top:595px;width:145px;height:15px;background:#69696b;"></div><svg class="b" style="left:1035px;top:598.7px;" width="10" height="7" viewBox="0 0 10 7"><path d="M0.4 3.5c2.4-4 6.8-4 9.2 0c-2.4 4-6.8 4-9.2 0z" fill="#e8e8e8"/><circle cx="5" cy="3.5" r="1.7" fill="#535355"/><circle cx="5" cy="3.5" r="0.8" fill="#e8e8e8"/></svg><svg class="b" style="left:1072px;top:597.5px;outline:0.6px solid #2e2e30" width="19" height="9.5" viewBox="0 0 19 9.5"><rect x="0" y="0" width="19" height="9.5" fill="#fff"/><rect x="2.4" y="0.0" width="2.4" height="2.4" fill="#d4d4d4"/><rect x="7.2" y="0.0" width="2.4" height="2.4" fill="#d4d4d4"/><rect x="12.0" y="0.0" width="2.4" height="2.4" fill="#d4d4d4"/><rect x="16.8" y="0.0" width="2.4" height="2.4" fill="#d4d4d4"/><rect x="0.0" y="2.4" width="2.4" height="2.4" fill="#d4d4d4"/><rect x="4.8" y="2.4" width="2.4" height="2.4" fill="#d4d4d4"/><rect x="9.6" y="2.4" width="2.4" height="2.4" fill="#d4d4d4"/><rect x="14.4" y="2.4" width="2.4" height="2.4" fill="#d4d4d4"/><rect x="2.4" y="4.8" width="2.4" height="2.4" fill="#d4d4d4"/><rect x="7.2" y="4.8" width="2.4" height="2.4" fill="#d4d4d4"/><rect x="12.0" y="4.8" width="2.4" height="2.4" fill="#d4d4d4"/><rect x="16.8" y="4.8" width="2.4" height="2.4" fill="#d4d4d4"/><rect x="0.0" y="7.2" width="2.4" height="2.4" fill="#d4d4d4"/><rect x="4.8" y="7.2" width="2.4" height="2.4" fill="#d4d4d4"/><rect x="9.6" y="7.2" width="2.4" height="2.4" fill="#d4d4d4"/><rect x="14.4" y="7.2" width="2.4" height="2.4" fill="#d4d4d4"/></svg><div class="t" style="left:1097.5px;top:597.9px;font-size:7.60px;line-height:9.1px;color:#e8e8e8;">图层 4</div><div class="b" style="left:1049px;top:611px;width:145px;height:14px;background:#69696b;"></div><svg class="b" style="left:1035px;top:614.4px;" width="10" height="7" viewBox="0 0 10 7"><path d="M0.4 3.5c2.4-4 6.8-4 9.2 0c-2.4 4-6.8 4-9.2 0z" fill="#e8e8e8"/><circle cx="5" cy="3.5" r="1.7" fill="#535355"/><circle cx="5" cy="3.5" r="0.8" fill="#e8e8e8"/></svg><svg class="b" style="left:1072px;top:613.1999999999999px;outline:0.6px solid #2e2e30" width="19" height="9.5" viewBox="0 0 19 9.5"><rect x="0" y="0" width="19" height="9.5" fill="#fff"/><rect x="2.4" y="0.0" width="2.4" height="2.4" fill="#d4d4d4"/><rect x="7.2" y="0.0" width="2.4" height="2.4" fill="#d4d4d4"/><rect x="12.0" y="0.0" width="2.4" height="2.4" fill="#d4d4d4"/><rect x="16.8" y="0.0" width="2.4" height="2.4" fill="#d4d4d4"/><rect x="0.0" y="2.4" width="2.4" height="2.4" fill="#d4d4d4"/><rect x="4.8" y="2.4" width="2.4" height="2.4" fill="#d4d4d4"/><rect x="9.6" y="2.4" width="2.4" height="2.4" fill="#d4d4d4"/><rect x="14.4" y="2.4" width="2.4" height="2.4" fill="#d4d4d4"/><rect x="2.4" y="4.8" width="2.4" height="2.4" fill="#d4d4d4"/><rect x="7.2" y="4.8" width="2.4" height="2.4" fill="#d4d4d4"/><rect x="12.0" y="4.8" width="2.4" height="2.4" fill="#d4d4d4"/><rect x="16.8" y="4.8" width="2.4" height="2.4" fill="#d4d4d4"/><rect x="0.0" y="7.2" width="2.4" height="2.4" fill="#d4d4d4"/><rect x="4.8" y="7.2" width="2.4" height="2.4" fill="#d4d4d4"/><rect x="9.6" y="7.2" width="2.4" height="2.4" fill="#d4d4d4"/><rect x="14.4" y="7.2" width="2.4" height="2.4" fill="#d4d4d4"/></svg><div class="t" style="left:1097.5px;top:613.6px;font-size:7.60px;line-height:9.1px;color:#e8e8e8;">图层 3</div><div class="b" style="left:1049px;top:626px;width:145px;height:15px;background:#69696b;"></div><svg class="b" style="left:1035px;top:630.1px;" width="10" height="7" viewBox="0 0 10 7"><path d="M0.4 3.5c2.4-4 6.8-4 9.2 0c-2.4 4-6.8 4-9.2 0z" fill="#e8e8e8"/><circle cx="5" cy="3.5" r="1.7" fill="#535355"/><circle cx="5" cy="3.5" r="0.8" fill="#e8e8e8"/></svg><svg class="b" style="left:1072px;top:628.9px;outline:0.6px solid #2e2e30" width="19" height="9.5" viewBox="0 0 19 9.5"><rect x="0" y="0" width="19" height="9.5" fill="#fff"/><rect x="2.4" y="0.0" width="2.4" height="2.4" fill="#d4d4d4"/><rect x="7.2" y="0.0" width="2.4" height="2.4" fill="#d4d4d4"/><rect x="12.0" y="0.0" width="2.4" height="2.4" fill="#d4d4d4"/><rect x="16.8" y="0.0" width="2.4" height="2.4" fill="#d4d4d4"/><rect x="0.0" y="2.4" width="2.4" height="2.4" fill="#d4d4d4"/><rect x="4.8" y="2.4" width="2.4" height="2.4" fill="#d4d4d4"/><rect x="9.6" y="2.4" width="2.4" height="2.4" fill="#d4d4d4"/><rect x="14.4" y="2.4" width="2.4" height="2.4" fill="#d4d4d4"/><rect x="2.4" y="4.8" width="2.4" height="2.4" fill="#d4d4d4"/><rect x="7.2" y="4.8" width="2.4" height="2.4" fill="#d4d4d4"/><rect x="12.0" y="4.8" width="2.4" height="2.4" fill="#d4d4d4"/><rect x="16.8" y="4.8" width="2.4" height="2.4" fill="#d4d4d4"/><rect x="0.0" y="7.2" width="2.4" height="2.4" fill="#d4d4d4"/><rect x="4.8" y="7.2" width="2.4" height="2.4" fill="#d4d4d4"/><rect x="9.6" y="7.2" width="2.4" height="2.4" fill="#d4d4d4"/><rect x="14.4" y="7.2" width="2.4" height="2.4" fill="#d4d4d4"/></svg><div class="t" style="left:1097.5px;top:629.3px;font-size:7.60px;line-height:9.1px;color:#e8e8e8;">图层 2</div><div class="b" style="left:1049px;top:642px;width:145px;height:15px;background:#69696b;"></div><svg class="b" style="left:1035px;top:645.8px;" width="10" height="7" viewBox="0 0 10 7"><path d="M0.4 3.5c2.4-4 6.8-4 9.2 0c-2.4 4-6.8 4-9.2 0z" fill="#e8e8e8"/><circle cx="5" cy="3.5" r="1.7" fill="#535355"/><circle cx="5" cy="3.5" r="0.8" fill="#e8e8e8"/></svg><svg class="b" style="left:1072px;top:644.5999999999999px;outline:0.6px solid #2e2e30" width="19" height="9.5" viewBox="0 0 19 9.5"><rect x="0" y="0" width="19" height="9.5" fill="#fff"/><rect x="2.4" y="0.0" width="2.4" height="2.4" fill="#d4d4d4"/><rect x="7.2" y="0.0" width="2.4" height="2.4" fill="#d4d4d4"/><rect x="12.0" y="0.0" width="2.4" height="2.4" fill="#d4d4d4"/><rect x="16.8" y="0.0" width="2.4" height="2.4" fill="#d4d4d4"/><rect x="0.0" y="2.4" width="2.4" height="2.4" fill="#d4d4d4"/><rect x="4.8" y="2.4" width="2.4" height="2.4" fill="#d4d4d4"/><rect x="9.6" y="2.4" width="2.4" height="2.4" fill="#d4d4d4"/><rect x="14.4" y="2.4" width="2.4" height="2.4" fill="#d4d4d4"/><rect x="2.4" y="4.8" width="2.4" height="2.4" fill="#d4d4d4"/><rect x="7.2" y="4.8" width="2.4" height="2.4" fill="#d4d4d4"/><rect x="12.0" y="4.8" width="2.4" height="2.4" fill="#d4d4d4"/><rect x="16.8" y="4.8" width="2.4" height="2.4" fill="#d4d4d4"/><rect x="0.0" y="7.2" width="2.4" height="2.4" fill="#d4d4d4"/><rect x="4.8" y="7.2" width="2.4" height="2.4" fill="#d4d4d4"/><rect x="9.6" y="7.2" width="2.4" height="2.4" fill="#d4d4d4"/><rect x="14.4" y="7.2" width="2.4" height="2.4" fill="#d4d4d4"/></svg><div class="t" style="left:1097.5px;top:645.0px;font-size:7.60px;line-height:9.1px;color:#e8e8e8;">图层 1</div><div class="b" style="left:1030px;top:672.45px;width:164px;height:0.7px;background:#4a4a4c;"></div><svg class="b" style="left:1035px;top:661.5px;" width="10" height="7" viewBox="0 0 10 7"><path d="M0.4 3.5c2.4-4 6.8-4 9.2 0c-2.4 4-6.8 4-9.2 0z" fill="#e8e8e8"/><circle cx="5" cy="3.5" r="1.7" fill="#535355"/><circle cx="5" cy="3.5" r="0.8" fill="#e8e8e8"/></svg><svg class="b" style="left:1072px;top:660.3px;outline:0.6px solid #2e2e30" width="9" height="9.5" viewBox="0 0 9 9.5"><rect x="0" y="0" width="9" height="9.5" fill="#fff"/><rect x="2.4" y="0.0" width="2.4" height="2.4" fill="#d4d4d4"/><rect x="7.2" y="0.0" width="2.4" height="2.4" fill="#d4d4d4"/><rect x="0.0" y="2.4" width="2.4" height="2.4" fill="#d4d4d4"/><rect x="4.8" y="2.4" width="2.4" height="2.4" fill="#d4d4d4"/><rect x="2.4" y="4.8" width="2.4" height="2.4" fill="#d4d4d4"/><rect x="7.2" y="4.8" width="2.4" height="2.4" fill="#d4d4d4"/><rect x="0.0" y="7.2" width="2.4" height="2.4" fill="#d4d4d4"/><rect x="4.8" y="7.2" width="2.4" height="2.4" fill="#d4d4d4"/></svg><svg class="b" style="left:1082.5px;top:661.5px;" width="8" height="7" viewBox="0 0 8 7"><rect x="1.5" y="1.5" width="5" height="4" fill="none" stroke="#e6e6e6" stroke-width="0.8"/><rect x="0.3" y="0.3" width="1.8" height="1.8" fill="#e6e6e6"/><rect x="5.9" y="0.3" width="1.8" height="1.8" fill="#e6e6e6"/><rect x="0.3" y="4.9" width="1.8" height="1.8" fill="#e6e6e6"/><rect x="5.9" y="4.9" width="1.8" height="1.8" fill="#e6e6e6"/></svg><div class="t" style="left:1098.5px;top:660.7px;font-size:7.60px;line-height:9.1px;color:#e4e4e4;">矩形 1</div><div class="b" style="left:1030px;top:688.1500000000001px;width:164px;height:0.7px;background:#4a4a4c;"></div><svg class="b" style="left:1035px;top:677.2px;" width="10" height="7" viewBox="0 0 10 7"><path d="M0.4 3.5c2.4-4 6.8-4 9.2 0c-2.4 4-6.8 4-9.2 0z" fill="#e8e8e8"/><circle cx="5" cy="3.5" r="1.7" fill="#535355"/><circle cx="5" cy="3.5" r="0.8" fill="#e8e8e8"/></svg><svg class="b" style="left:1063px;top:677.9000000000001px;" width="3.6" height="5.6" viewBox="0 0 3.6 5.6"><path d="M0.5 0.5l2.4 2.3-2.4 2.3" fill="none" stroke="#a8a8a8" stroke-width="0.8"/></svg><svg class="b" style="left:1070.5px;top:677.2px;" width="9" height="7.5" viewBox="0 0 9 7.5"><path d="M0.3 0.6h3l0.8 1h4.6v5.6h-8.4z" fill="#e2e2e2"/></svg><div class="t" style="left:1085.8px;top:676.4px;font-size:7.60px;line-height:9.1px;color:#e4e4e4;">组 12</div><div class="b" style="left:1030px;top:703.85px;width:164px;height:0.7px;background:#4a4a4c;"></div><svg class="b" style="left:1035px;top:692.9px;" width="10" height="7" viewBox="0 0 10 7"><path d="M0.4 3.5c2.4-4 6.8-4 9.2 0c-2.4 4-6.8 4-9.2 0z" fill="#e8e8e8"/><circle cx="5" cy="3.5" r="1.7" fill="#535355"/><circle cx="5" cy="3.5" r="0.8" fill="#e8e8e8"/></svg><svg class="b" style="left:1065.5px;top:693.4px;" width="4" height="6" viewBox="0 0 4 6"><path d="M3 0.4v3.6M3 4l-2.4-0 M0.6 4l1.2-1.2M0.6 4l1.2 1.2" stroke="#e0e0e0" stroke-width="0.8" fill="none"/></svg><svg class="b" style="left:1072px;top:691.6999999999999px;outline:0.6px solid #2e2e30" width="19" height="9.5" viewBox="0 0 19 9.5"><rect x="0" y="0" width="19" height="9.5" fill="#fff"/><rect x="2.4" y="0.0" width="2.4" height="2.4" fill="#d4d4d4"/><rect x="7.2" y="0.0" width="2.4" height="2.4" fill="#d4d4d4"/><rect x="12.0" y="0.0" width="2.4" height="2.4" fill="#d4d4d4"/><rect x="16.8" y="0.0" width="2.4" height="2.4" fill="#d4d4d4"/><rect x="0.0" y="2.4" width="2.4" height="2.4" fill="#d4d4d4"/><rect x="4.8" y="2.4" width="2.4" height="2.4" fill="#d4d4d4"/><rect x="9.6" y="2.4" width="2.4" height="2.4" fill="#d4d4d4"/><rect x="14.4" y="2.4" width="2.4" height="2.4" fill="#d4d4d4"/><rect x="2.4" y="4.8" width="2.4" height="2.4" fill="#d4d4d4"/><rect x="7.2" y="4.8" width="2.4" height="2.4" fill="#d4d4d4"/><rect x="12.0" y="4.8" width="2.4" height="2.4" fill="#d4d4d4"/><rect x="16.8" y="4.8" width="2.4" height="2.4" fill="#d4d4d4"/><rect x="0.0" y="7.2" width="2.4" height="2.4" fill="#d4d4d4"/><rect x="4.8" y="7.2" width="2.4" height="2.4" fill="#d4d4d4"/><rect x="9.6" y="7.2" width="2.4" height="2.4" fill="#d4d4d4"/><rect x="14.4" y="7.2" width="2.4" height="2.4" fill="#d4d4d4"/></svg><div class="t" style="left:1097.5px;top:692.1px;font-size:7.60px;line-height:9.1px;color:#e8e8e8;">图层 10</div><div class="b" style="left:1030px;top:719.5500000000001px;width:164px;height:0.7px;background:#4a4a4c;"></div><svg class="b" style="left:1035px;top:708.6px;" width="10" height="7" viewBox="0 0 10 7"><path d="M0.4 3.5c2.4-4 6.8-4 9.2 0c-2.4 4-6.8 4-9.2 0z" fill="#e8e8e8"/><circle cx="5" cy="3.5" r="1.7" fill="#535355"/><circle cx="5" cy="3.5" r="0.8" fill="#e8e8e8"/></svg><svg class="b" style="left:1063px;top:709.3000000000001px;" width="3.6" height="5.6" viewBox="0 0 3.6 5.6"><path d="M0.5 0.5l2.4 2.3-2.4 2.3" fill="none" stroke="#a8a8a8" stroke-width="0.8"/></svg><svg class="b" style="left:1070.5px;top:708.6px;" width="9" height="7.5" viewBox="0 0 9 7.5"><path d="M0.3 0.6h3l0.8 1h4.6v5.6h-8.4z" fill="#e2e2e2"/></svg><div class="t" style="left:1085.8px;top:707.8px;font-size:7.60px;line-height:9.1px;color:#e4e4e4;">组 12 拷贝 2</div><div class="b" style="left:1030px;top:735.25px;width:164px;height:0.7px;background:#4a4a4c;"></div><svg class="b" style="left:1035px;top:724.3px;" width="10" height="7" viewBox="0 0 10 7"><path d="M0.4 3.5c2.4-4 6.8-4 9.2 0c-2.4 4-6.8 4-9.2 0z" fill="#e8e8e8"/><circle cx="5" cy="3.5" r="1.7" fill="#535355"/><circle cx="5" cy="3.5" r="0.8" fill="#e8e8e8"/></svg><svg class="b" style="left:1055.5px;top:724.8px;" width="4" height="6" viewBox="0 0 4 6"><path d="M3 0.4v3.6M3 4l-2.4-0 M0.6 4l1.2-1.2M0.6 4l1.2 1.2" stroke="#e0e0e0" stroke-width="0.8" fill="none"/></svg><svg class="b" style="left:1062px;top:723.0999999999999px;outline:0.6px solid #2e2e30" width="19" height="9.5" viewBox="0 0 19 9.5"><rect x="0" y="0" width="19" height="9.5" fill="#fff"/><rect x="2.4" y="0.0" width="2.4" height="2.4" fill="#d4d4d4"/><rect x="7.2" y="0.0" width="2.4" height="2.4" fill="#d4d4d4"/><rect x="12.0" y="0.0" width="2.4" height="2.4" fill="#d4d4d4"/><rect x="16.8" y="0.0" width="2.4" height="2.4" fill="#d4d4d4"/><rect x="0.0" y="2.4" width="2.4" height="2.4" fill="#d4d4d4"/><rect x="4.8" y="2.4" width="2.4" height="2.4" fill="#d4d4d4"/><rect x="9.6" y="2.4" width="2.4" height="2.4" fill="#d4d4d4"/><rect x="14.4" y="2.4" width="2.4" height="2.4" fill="#d4d4d4"/><rect x="2.4" y="4.8" width="2.4" height="2.4" fill="#d4d4d4"/><rect x="7.2" y="4.8" width="2.4" height="2.4" fill="#d4d4d4"/><rect x="12.0" y="4.8" width="2.4" height="2.4" fill="#d4d4d4"/><rect x="16.8" y="4.8" width="2.4" height="2.4" fill="#d4d4d4"/><rect x="0.0" y="7.2" width="2.4" height="2.4" fill="#d4d4d4"/><rect x="4.8" y="7.2" width="2.4" height="2.4" fill="#d4d4d4"/><rect x="9.6" y="7.2" width="2.4" height="2.4" fill="#d4d4d4"/><rect x="14.4" y="7.2" width="2.4" height="2.4" fill="#d4d4d4"/></svg><div class="t" style="left:1087.5px;top:723.5px;font-size:7.60px;line-height:9.1px;color:#e8e8e8;">图层 11</div><svg class="b" style="left:1079px;top:616.4px;" width="4" height="4.5" viewBox="0 0 4 4.5"><path d="M0.3 0.3l3 2.6-1.3 0.2 0.6 1.3-0.6 0.1-0.6-1.2-1.1 0.8z" fill="#333"/></svg><svg class="b" style="left:1079px;top:647.8px;" width="4" height="4.5" viewBox="0 0 4 4.5"><path d="M0.3 0.3l3 2.6-1.3 0.2 0.6 1.3-0.6 0.1-0.6-1.2-1.1 0.8z" fill="#333"/></svg><svg class="b" style="left:1079px;top:694.9px;" width="4" height="4.5" viewBox="0 0 4 4.5"><path d="M0.3 0.3l3 2.6-1.3 0.2 0.6 1.3-0.6 0.1-0.6-1.2-1.1 0.8z" fill="#333"/></svg><svg class="b" style="left:1069px;top:726.3px;" width="4" height="4.5" viewBox="0 0 4 4.5"><path d="M0.3 0.3l3 2.6-1.3 0.2 0.6 1.3-0.6 0.1-0.6-1.2-1.1 0.8z" fill="#333"/></svg><div class="b" style="left:1030px;top:734.5px;width:164px;height:12.5px;background:#535355;"></div><svg class="b" style="left:1081px;top:737.5px;" width="9" height="6" viewBox="0 0 9 6"><rect x="0.5" y="1" width="4.2" height="3.6" rx="1.8" fill="none" stroke="#d6d6d6" stroke-width="0.9"/><rect x="4.2" y="1" width="4.2" height="3.6" rx="1.8" fill="none" stroke="#d6d6d6" stroke-width="0.9"/></svg><div class="t" style="left:1099px;top:735.5px;font-size:8.5px;line-height:10px;color:#8c8c8e;font-style:italic;font-family:'Liberation Serif',serif">fx</div><svg class="b" style="left:1115px;top:737px;" width="9" height="7.5" viewBox="0 0 9 7.5"><rect x="0.5" y="0.5" width="8" height="6.5" fill="#d6d6d6"/><circle cx="4.5" cy="3.75" r="2" fill="#535355"/></svg><svg class="b" style="left:1132px;top:736.5px;" width="8.5" height="8.5" viewBox="0 0 8.5 8.5"><circle cx="4.25" cy="4.25" r="3.5" fill="none" stroke="#d6d6d6" stroke-width="0.9"/><path d="M4.25 0.75a3.5 3.5 0 0 1 0 7z" fill="#d6d6d6" transform="rotate(45 4.25 4.25)"/></svg><svg class="b" style="left:1149px;top:737px;" width="9" height="7.5" viewBox="0 0 9 7.5"><path d="M0.3 0.4h3l0.8 1h4.6v5.8h-8.4z" fill="#d6d6d6"/></svg><svg class="b" style="left:1166px;top:736.5px;" width="8.5" height="8.5" viewBox="0 0 8.5 8.5"><path d="M0.6 0.6h7.2v5l-2.4 2.4h-4.8z" fill="none" stroke="#d6d6d6" stroke-width="0.9"/><path d="M7.8 5.6h-2.4v2.4" fill="none" stroke="#d6d6d6" stroke-width="0.8"/></svg><svg class="b" style="left:1182.5px;top:736px;" width="7.5" height="9" viewBox="0 0 7.5 9"><path d="M0.4 1.8h6.7M2.6 1.6v-1h2.3v1M1.1 2.2l0.5 6.2h4.3l0.5-6.2" fill="none" stroke="#d6d6d6" stroke-width="0.9"/><path d="M2.8 3.4v3.8M4.7 3.4v3.8" stroke="#d6d6d6" stroke-width="0.7"/></svg>
<div class="b" style="left:993.8px;top:320px;width:7.4px;height:237px;background:#67676a;"></div><div class="b" style="left:864.6px;top:167.6px;width:136.6px;height:164.4px;background:#535355;box-shadow:0 0 0 0.7px #343436"></div><div class="b" style="left:892px;top:167.6px;width:109.2px;height:18px;background:#434345;"></div><div class="t" style="left:870.5px;top:172.2px;font-size:7.60px;line-height:9.1px;color:#f0f0f0;">字符</div><div class="t" style="left:898.5px;top:172.2px;font-size:7.60px;line-height:9.1px;color:#9a9a9c;">段落</div><svg class="b" style="left:977.5px;top:174.5px;" width="6.5" height="5" viewBox="0 0 6.5 5"><path d="M0.6 0.5l2 2-2 2M3.6 0.5l2 2-2 2" fill="none" stroke="#dcdcdc" stroke-width="0.9"/></svg><div class="b" style="left:988px;top:173px;width:0.8px;height:8px;background:#8a8a8c;"></div><svg class="b" style="left:992.5px;top:174.3px;" width="7" height="5.6" viewBox="0 0 7 5.6"><path d="M0 0.7h7M0 2.8h7M0 4.9h7" stroke="#d0d0d0" stroke-width="1"/></svg><div class="b" style="left:868.4px;top:195.8px;width:73.6px;height:10.6px;background:#444446;"></div><div class="b" style="left:931.3px;top:195.8px;width:0.7px;height:10.6px;background:#535355;"></div><div class="t" style="left:870.0px;top:196.8px;font-size:7.40px;line-height:8.9px;color:#ececec;transform:scaleX(0.943);transform-origin:0 50%;">Adobe 黑体 Std</div><svg class="b" style="left:934.5px;top:199.5px;" width="5.4" height="3.4" viewBox="0 0 5.4 3.4"><path d="M0.5 0.5l2.2 2.2 2.2-2.2" fill="none" stroke="#c4c4c4" stroke-width="0.85"/></svg><div class="b" style="left:954px;top:195.8px;width:45.8px;height:10.6px;background:#444446;"></div><div class="b" style="left:989.3px;top:195.8px;width:0.7px;height:10.6px;background:#535355;"></div><div class="t" style="left:959.0px;top:196.5px;font-size:7.50px;line-height:9.0px;color:#ececec;">-</div><svg class="b" style="left:992.3px;top:199.5px;" width="5.4" height="3.4" viewBox="0 0 5.4 3.4"><path d="M0.5 0.5l2.2 2.2 2.2-2.2" fill="none" stroke="#c4c4c4" stroke-width="0.85"/></svg><div class="t" style="left:867.2px;top:215.7px;font-size:6.5px;line-height:6.5px;color:#ececec;font-weight:bold;font-family:'Liberation Serif',serif;">T</div><div class="t" style="left:870.6px;top:211.3px;font-size:11.5px;line-height:11.5px;color:#ececec;font-weight:bold;font-family:'Liberation Serif',serif;">T</div><div class="b" style="left:881px;top:212px;width:51px;height:11px;background:#444446;"></div><div class="b" style="left:921.5px;top:212px;width:0.7px;height:11px;background:#535355;"></div><div class="t" style="left:882.5px;top:213.2px;font-size:7.40px;line-height:8.9px;color:#ececec;transform:scaleX(0.985);transform-origin:0 50%;">20.7 点</div><svg class="b" style="left:924.3px;top:215.9px;" width="5.4" height="3.4" viewBox="0 0 5.4 3.4"><path d="M0.5 0.5l2.2 2.2 2.2-2.2" fill="none" stroke="#c4c4c4" stroke-width="0.85"/></svg><svg class="b" style="left:937.5px;top:211.3px;" width="13" height="13" viewBox="0 0 13 13"><path d="M1.8 2.4v8.4M0.4 4l1.4-1.8 1.4 1.8M0.4 9.2l1.4 1.8 1.4-1.8" fill="none" stroke="#e6e6e6" stroke-width="0.8"/><path d="M5.2 5.6l2.2-4.8h0.6l2.2 4.8M6 4h3.4" fill="none" stroke="#e6e6e6" stroke-width="0.9"/><path d="M4.8 12.4l2.6-5.6h0.6l2.6 5.6M5.8 10.4h3.8" fill="none" stroke="#e6e6e6" stroke-width="1"/></svg><div class="b" style="left:952px;top:212px;width:47.8px;height:11px;background:#444446;"></div><div class="b" style="left:989.3px;top:212px;width:0.7px;height:11px;background:#535355;"></div><div class="t" style="left:953.5px;top:213.2px;font-size:7.40px;line-height:8.9px;color:#ececec;transform:scaleX(1.064);transform-origin:0 50%;">(自动)</div><svg class="b" style="left:992.3px;top:215.9px;" width="5.4" height="3.4" viewBox="0 0 5.4 3.4"><path d="M0.5 0.5l2.2 2.2 2.2-2.2" fill="none" stroke="#c4c4c4" stroke-width="0.85"/></svg><svg class="b" style="left:867px;top:225.2px;" width="13" height="12" viewBox="0 0 13 12"><path d="M0.4 0.8l2.6 6.6 2.4-6.6M3.2 2.6" fill="none" stroke="#e0e0e0" stroke-width="0.95"/><path d="M6 7.4l2.6-6.6 2.8 6.6M7 5.2h3.4" fill="none" stroke="#e0e0e0" stroke-width="0.95"/><path d="M5.4 9.4v2.2M5.4 10.5h6.2M10.4 9.3l1.4 1.2-1.4 1.2" fill="none" stroke="#e0e0e0" stroke-width="0.7"/></svg><div class="b" style="left:881px;top:225.3px;width:51px;height:11px;background:#444446;"></div><div class="b" style="left:921.5px;top:225.3px;width:0.7px;height:11px;background:#535355;"></div><svg class="b" style="left:924.3px;top:229.3px;" width="5.4" height="3.4" viewBox="0 0 5.4 3.4"><path d="M0.5 0.5l2.2 2.2 2.2-2.2" fill="none" stroke="#c4c4c4" stroke-width="0.85"/></svg><svg class="b" style="left:937.5px;top:225px;" width="13.5" height="12.5" viewBox="0 0 13.5 12.5"><rect x="0.3" y="0.3" width="12.6" height="8" fill="#e6e6e6"/><path d="M1.4 1.6l2.2 5.6 2-5.6M6.8 7.4l2.2-5.8 2.4 5.8M7.6 5.4h3" fill="none" stroke="#444446" stroke-width="1"/><path d="M0.6 10.8h12M1.8 9.6l-1.4 1.2 1.4 1.2M11.4 9.6l1.4 1.2-1.4 1.2" fill="none" stroke="#e0e0e0" stroke-width="0.7"/></svg><div class="b" style="left:952px;top:225.3px;width:47.8px;height:11px;background:#444446;"></div><div class="b" style="left:989.3px;top:225.3px;width:0.7px;height:11px;background:#535355;"></div><div class="t" style="left:953.8px;top:226.6px;font-size:7.40px;line-height:8.9px;color:#ececec;">500</div><svg class="b" style="left:992.3px;top:229.3px;" width="5.4" height="3.4" viewBox="0 0 5.4 3.4"><path d="M0.5 0.5l2.2 2.2 2.2-2.2" fill="none" stroke="#c4c4c4" stroke-width="0.85"/></svg><svg class="b" style="left:867.5px;top:238.8px;" width="12" height="12.5" viewBox="0 0 12 12.5"><rect x="1.6" y="0.6" width="8.4" height="8" fill="none" stroke="#d6d6d6" stroke-width="0.7"/><path d="M3.4 2.2v5M4.6 3h3.6M5 4.6h2.8v2.6h-2.8zM6.4 2.2v5.4" fill="none" stroke="#d6d6d6" stroke-width="0.7"/><path d="M0.4 11h4M7.6 11h4M3.4 9.9l1.2 1.1-1.2 1.1M8.6 9.9l-1.2 1.1 1.2 1.1" fill="none" stroke="#d6d6d6" stroke-width="0.7"/></svg><div class="b" style="left:881px;top:239.3px;width:51px;height:11px;background:#444446;"></div><div class="b" style="left:921.5px;top:239.3px;width:0.7px;height:11px;background:#535355;"></div><div class="t" style="left:882.6px;top:240.6px;font-size:7.40px;line-height:8.9px;color:#ececec;">0%</div><svg class="b" style="left:924.3px;top:243.3px;" width="5.4" height="3.4" viewBox="0 0 5.4 3.4"><path d="M0.5 0.5l2.2 2.2 2.2-2.2" fill="none" stroke="#c4c4c4" stroke-width="0.85"/></svg><svg class="b" style="left:866.8px;top:253.5px;" width="4" height="11.5" viewBox="0 0 4 11.5"><path d="M2 1.4v8.6M0.5 3l1.5-1.8 1.5 1.8M0.5 8.6l1.5 1.8 1.5-1.8" fill="none" stroke="#e6e6e6" stroke-width="0.8"/></svg><div class="t" style="left:870.6px;top:253px;font-size:12px;line-height:12px;color:#ececec;font-weight:bold;font-family:'Liberation Serif',serif;">T</div><div class="b" style="left:881px;top:253.4px;width:33px;height:11.3px;background:#444446;"></div><div class="t" style="left:882.6px;top:254.9px;font-size:7.40px;line-height:8.9px;color:#ececec;">100%</div><div class="t" style="left:954.6px;top:251.5px;font-size:11.5px;line-height:11.5px;color:#ececec;font-weight:bold;font-family:'Liberation Serif',serif;">T</div><svg class="b" style="left:953px;top:262px;" width="11.5" height="3.4" viewBox="0 0 11.5 3.4"><path d="M1 1.7h9.5M2.2 0.4l-1.5 1.3 1.5 1.3M9.3 0.4l1.5 1.3-1.5 1.3" fill="none" stroke="#e6e6e6" stroke-width="0.8"/></svg><div class="b" style="left:966px;top:253.4px;width:33.8px;height:11.3px;background:#444446;"></div><div class="t" style="left:968.0px;top:254.9px;font-size:7.40px;line-height:8.9px;color:#ececec;">100%</div><svg class="b" style="left:867.2px;top:268.8px;" width="11" height="12" viewBox="0 0 11 12"><path d="M0.6 8.4l2.6-7h0.7l2.6 7M1.6 6h4" fill="none" stroke="#e0e0e0" stroke-width="0.95"/><path d="M8.8 1.6v3M7.6 2.8l1.2-1.4 1.2 1.4M7 6.4h3.6M8.8 7.6v3M7.6 9.4l1.2 1.4 1.2-1.4" fill="none" stroke="#e0e0e0" stroke-width="0.75"/></svg><div class="b" style="left:881px;top:268.8px;width:33px;height:11.3px;background:#444446;"></div><div class="t" style="left:882.6px;top:270.3px;font-size:7.40px;line-height:8.9px;color:#ececec;transform:scaleX(0.987);transform-origin:0 50%;">0 点</div><div class="t" style="left:943.5px;top:270.1px;font-size:7.60px;line-height:9.1px;color:#e0e0e0;transform:scaleX(1.069);transform-origin:0 50%;">颜色:</div><div class="b" style="left:965.6px;top:267.4px;width:35px;height:13.4px;background:#434345;border-radius:1px"></div><div class="t" style="left:871px;width:20px;text-align:center;top:283.3px;font-size:11.5px;line-height:13.8px;color:#f0f0f0;font-family:'Liberation Serif',serif;font-weight:bold;">T</div><div class="t" style="left:886.3px;width:20px;text-align:center;top:283.3px;font-size:11.5px;line-height:13.8px;color:#f0f0f0;font-family:'Liberation Serif',serif;font-style:italic;">T</div><div class="t" style="left:901px;width:20px;text-align:center;top:283.9px;font-size:10.5px;line-height:12.6px;color:#f0f0f0;font-family:'Liberation Serif',serif;letter-spacing:-0.3px;">TT</div><div class="t" style="left:916px;width:20px;text-align:center;top:283.9px;font-size:10.5px;line-height:12.6px;color:#f0f0f0;font-family:'Liberation Serif',serif;">T<span style="font-size:7.5px">T</span></div><div class="t" style="left:931.5px;width:20px;text-align:center;top:283.9px;font-size:10.5px;line-height:12.6px;color:#f0f0f0;font-family:'Liberation Serif',serif;">T<span style="font-size:6px;position:relative;top:-3.5px">1</span></div><div class="t" style="left:947px;width:20px;text-align:center;top:283.9px;font-size:10.5px;line-height:12.6px;color:#f0f0f0;font-family:'Liberation Serif',serif;">T<span style="font-size:6px;position:relative;top:1.5px">1</span></div><div class="t" style="left:962px;width:20px;text-align:center;top:283.3px;font-size:10.5px;line-height:12.6px;color:#f0f0f0;font-family:'Liberation Serif',serif;">T</div><div class="b" style="left:968px;top:295.2px;width:8px;height:0.9px;background:#f0f0f0;"></div><div class="t" style="left:977px;width:20px;text-align:center;top:283.9px;font-size:10.5px;line-height:12.6px;color:#f0f0f0;font-family:'Liberation Serif',serif;">T</div><div class="b" style="left:982.5px;top:289.9px;width:9px;height:0.9px;background:#f0f0f0;"></div><div class="t" style="left:871px;width:20px;text-align:center;top:301.4px;font-size:11.5px;line-height:13.8px;color:#8e8e90;font-family:'Liberation Serif',serif;">fi</div><div class="t" style="left:886.3px;width:20px;text-align:center;top:302.3px;font-size:10px;line-height:12.0px;color:#8e8e90;font-family:'Liberation Serif',serif;"><i>o</i></div><div class="t" style="left:901px;width:20px;text-align:center;top:301.4px;font-size:11.5px;line-height:13.8px;color:#c8c8c8;font-family:'Liberation Serif',serif;">st</div><div class="t" style="left:916px;width:20px;text-align:center;top:301.1px;font-size:12px;line-height:14.4px;color:#8e8e90;font-family:'Liberation Serif',serif;"><i>A</i></div><div class="t" style="left:931.5px;width:20px;text-align:center;top:301.7px;font-size:11px;line-height:13.2px;color:#8e8e90;font-family:'Liberation Serif',serif;">aa</div><div class="b" style="left:936.5px;top:303.3px;width:10px;height:0.8px;background:#8e8e90;"></div><div class="t" style="left:947px;width:20px;text-align:center;top:301.4px;font-size:11.5px;line-height:13.8px;color:#8e8e90;font-family:'Liberation Serif',serif;"><i>T</i></div><div class="t" style="left:962px;width:20px;text-align:center;top:301.7px;font-size:11px;line-height:13.2px;color:#8e8e90;font-family:'Liberation Serif',serif;">1<span style="font-size:6px;position:relative;top:-3.5px">st</span></div><div class="t" style="left:977px;width:20px;text-align:center;top:301.7px;font-size:11px;line-height:13.2px;color:#8e8e90;font-family:'Liberation Serif',serif;">&frac12;</div><div class="b" style="left:867.7px;top:318.9px;width:75.1px;height:11.4px;background:#444446;"></div><div class="t" style="left:873.0px;top:320.2px;font-size:7.50px;line-height:9.0px;color:#ececec;transform:scaleX(1.000);transform-origin:0 50%;">美国英语</div><svg class="b" style="left:935px;top:323.0px;" width="5.4" height="3.4" viewBox="0 0 5.4 3.4"><path d="M0.5 0.5l2.2 2.2 2.2-2.2" fill="none" stroke="#c4c4c4" stroke-width="0.85"/></svg><div class="t" style="left:945.8px;top:317.9px;font-size:6.2px;line-height:8px;color:#d8d8d8">a<span style="font-size:9px">a</span></div><div class="b" style="left:959.5px;top:318.9px;width:40.3px;height:11.4px;background:#444446;"></div><div class="t" style="left:964.5px;top:320.1px;font-size:7.60px;line-height:9.1px;color:#ececec;">锐利</div><svg class="b" style="left:992px;top:323.0px;" width="5.4" height="3.4" viewBox="0 0 5.4 3.4"><path d="M0.5 0.5l2.2 2.2 2.2-2.2" fill="none" stroke="#c4c4c4" stroke-width="0.85"/></svg>
<svg class="b" style="left:0;top:0" width="1000" height="740" viewBox="0 0 1000 740"><defs>
<filter id="nz" x="0" y="0" width="100%" height="100%"><feTurbulence type="fractalNoise" baseFrequency="1.1" numOctaves="2" seed="3" result="n"/><feColorMatrix in="n" type="matrix" values="0 0 0 0 1  0 0 0 0 1  0 0 0 0 1  1.6 0 0 0 -0.62" result="a"/><feComposite in="a" in2="SourceGraphic" operator="in"/></filter>
<filter id="nzd" x="0" y="0" width="100%" height="100%"><feTurbulence type="fractalNoise" baseFrequency="1.1" numOctaves="2" seed="8" result="n"/><feColorMatrix in="n" type="matrix" values="0 0 0 0 0  0 0 0 0 0  0 0 0 0 0  1.6 0 0 0 -0.62" result="a"/><feComposite in="a" in2="SourceGraphic" operator="in"/></filter>
<linearGradient id="potg" x1="0" y1="0" x2="1" y2="0"><stop offset="0" stop-color="#646466"/><stop offset="0.5" stop-color="#48484a"/><stop offset="1" stop-color="#28282c"/></linearGradient>
<linearGradient id="potv" x1="0" y1="0" x2="0" y2="1"><stop offset="0" stop-color="#000" stop-opacity="0.18"/><stop offset="0.08" stop-color="#000" stop-opacity="0"/></linearGradient>
<linearGradient id="cupg" x1="0" y1="0" x2="1" y2="0"><stop offset="0" stop-color="#f4f4f4"/><stop offset="0.55" stop-color="#ebebeb"/><stop offset="1" stop-color="#d2d2d4"/></linearGradient>
<linearGradient id="slv" x1="0" y1="0" x2="1" y2="0"><stop offset="0" stop-color="#b39d84"/><stop offset="0.5" stop-color="#a08669"/><stop offset="1" stop-color="#94795c"/></linearGradient>
<linearGradient id="bagf" x1="0" y1="0" x2="0" y2="1"><stop offset="0" stop-color="#cfa98a"/><stop offset="0.5" stop-color="#c69b7a"/><stop offset="1" stop-color="#c29676"/></linearGradient>
<linearGradient id="bags" x1="0" y1="0" x2="0" y2="1"><stop offset="0" stop-color="#b88d6b"/><stop offset="0.5" stop-color="#b08360"/><stop offset="1" stop-color="#b98e6c"/></linearGradient>
<linearGradient id="lfL" x1="0" y1="0" x2="1" y2="1"><stop offset="0" stop-color="#4fae3f"/><stop offset="1" stop-color="#2b7d27"/></linearGradient>
<linearGradient id="shd" x1="0" y1="0" x2="1" y2="0"><stop offset="0" stop-color="#c9c9cb"/><stop offset="0.5" stop-color="#b4b4b6"/><stop offset="1" stop-color="#bcbcbe"/></linearGradient>
<linearGradient id="fadeL" x1="0" y1="0" x2="1" y2="0"><stop offset="0" stop-color="#d2d2d2" stop-opacity="0"/><stop offset="0.4" stop-color="#d0d0d0" stop-opacity="0.9"/><stop offset="1" stop-color="#c4c4c4"/></linearGradient>
<linearGradient id="lfn1" x1="0" y1="0" x2="1" y2="1"><stop offset="0" stop-color="#fff"/><stop offset="0.6" stop-color="#fff" stop-opacity="0.2"/><stop offset="1" stop-color="#fff" stop-opacity="0"/></linearGradient>
<linearGradient id="lfn2" x1="1" y1="0" x2="0" y2="1"><stop offset="0" stop-color="#fff"/><stop offset="0.6" stop-color="#fff" stop-opacity="0.25"/><stop offset="1" stop-color="#fff" stop-opacity="0"/></linearGradient>
<linearGradient id="lfn3" x1="0" y1="0" x2="0" y2="1"><stop offset="0" stop-color="#fff"/><stop offset="0.55" stop-color="#fff" stop-opacity="0.3"/><stop offset="1" stop-color="#fff" stop-opacity="0"/></linearGradient>
<linearGradient id="lfd1" x1="0" y1="0" x2="1" y2="0.6"><stop offset="0.3" stop-color="#000" stop-opacity="0"/><stop offset="1" stop-color="#000"/></linearGradient>
<linearGradient id="lfd2" x1="1" y1="0" x2="0" y2="0.6"><stop offset="0.3" stop-color="#000" stop-opacity="0"/><stop offset="1" stop-color="#000"/></linearGradient>
<linearGradient id="lfd3" x1="0" y1="0" x2="0" y2="1"><stop offset="0.35" stop-color="#000" stop-opacity="0"/><stop offset="1" stop-color="#000"/></linearGradient>
<linearGradient id="potn" x1="0" y1="0" x2="1" y2="0"><stop offset="0" stop-color="#fff"/><stop offset="0.55" stop-color="#fff" stop-opacity="0.6"/><stop offset="0.9" stop-color="#fff" stop-opacity="0"/></linearGradient>
<linearGradient id="cupn" x1="0" y1="0" x2="1" y2="0"><stop offset="0.35" stop-color="#000" stop-opacity="0"/><stop offset="1" stop-color="#000"/></linearGradient>
<linearGradient id="rimg" x1="0" y1="0" x2="1" y2="0"><stop offset="0" stop-color="#fbfbfb"/><stop offset="0.6" stop-color="#f6f6f6"/><stop offset="1" stop-color="#e6e6e8"/></linearGradient>
<linearGradient id="slvn" x1="0" y1="0" x2="1" y2="0"><stop offset="0" stop-color="#fff"/><stop offset="0.7" stop-color="#fff" stop-opacity="0.3"/><stop offset="1" stop-color="#fff" stop-opacity="0.1"/></linearGradient>
<linearGradient id="bagsn" x1="0" y1="0" x2="0" y2="1"><stop offset="0" stop-color="#fff"/><stop offset="0.7" stop-color="#fff" stop-opacity="0.4"/><stop offset="1" stop-color="#fff" stop-opacity="0"/></linearGradient>
<linearGradient id="bagfn" x1="0" y1="0" x2="1" y2="0.3"><stop offset="0" stop-color="#fff"/><stop offset="0.35" stop-color="#fff" stop-opacity="0.25"/><stop offset="0.6" stop-color="#fff" stop-opacity="0"/></linearGradient>
<linearGradient id="bagh" x1="0" y1="0" x2="1" y2="0"><stop offset="0" stop-color="#d9b596" stop-opacity="0.7"/><stop offset="0.3" stop-color="#d9b596" stop-opacity="0"/><stop offset="0.85" stop-color="#b98a66" stop-opacity="0"/><stop offset="1" stop-color="#b98a66" stop-opacity="0.55"/></linearGradient>
<linearGradient id="flap" x1="0" y1="0" x2="0" y2="1"><stop offset="0" stop-color="#d8b394"/><stop offset="1" stop-color="#d0a98a"/></linearGradient>
<linearGradient id="shl" gradientUnits="userSpaceOnUse" x1="430" y1="0" x2="468" y2="0"><stop offset="0" stop-color="#174d18" stop-opacity="0"/><stop offset="1" stop-color="#174d18" stop-opacity="0.55"/></linearGradient>
<linearGradient id="shr" gradientUnits="userSpaceOnUse" x1="552" y1="0" x2="514" y2="0"><stop offset="0" stop-color="#174d18" stop-opacity="0"/><stop offset="1" stop-color="#174d18" stop-opacity="0.5"/></linearGradient>
</defs><ellipse cx="728" cy="585.6" rx="141" ry="5.4" fill="url(#shd)"/><path d="M395.4 355.4 C415 349.5 441 357 461 375 L472 423 L412.5 423 C404 401 396 380 395.4 355.4Z" fill="#2d7d2a"/><path d="M395.4 355.4 L468 423 L412.5 423 C404 401 396 380 395.4 355.4Z" fill="#42a03a"/><path d="M587.6 355 C568 349.5 542 358 522 376 L510 423 L566.5 423 C578 402 588.2 380 587.6 355Z" fill="#3c9636"/><path d="M587.6 355 L526 423 L566.5 423 C578 402 588.2 380 587.6 355Z" fill="#2b7929"/><g filter="url(#nz)" opacity="0.5"><path d="M395.4 355.4 C415 349.5 441 357 461 375 L472 423 L412.5 423 C404 401 396 380 395.4 355.4Z" fill="url(#lfn1)"/><path d="M587.6 355 C568 349.5 542 358 522 376 L510 423 L566.5 423 C578 402 588.2 380 587.6 355Z" fill="url(#lfn2)"/></g><g filter="url(#nzd)" opacity="0.4"><path d="M395.4 355.4 C415 349.5 441 357 461 375 L472 423 L412.5 423 C404 401 396 380 395.4 355.4Z" fill="url(#lfd1)"/><path d="M587.6 355 C568 349.5 542 358 522 376 L510 423 L566.5 423 C578 402 588.2 380 587.6 355Z" fill="url(#lfd2)"/></g><path d="M395.4 355.4 C415 349.5 441 357 461 375 L472 423 L412.5 423 C404 401 396 380 395.4 355.4Z" fill="url(#shl)"/><path d="M587.6 355 C568 349.5 542 358 522 376 L510 423 L566.5 423 C578 402 588.2 380 587.6 355Z" fill="url(#shr)"/><path d="M490.9 312.6 C474 328 459 352 457.9 378 C457.5 396 462 411 468.3 423 L518 423 C523 409 525 393 524 377 C522 352 508 328 490.9 312.6Z" fill="#2f802c"/><path d="M490.9 312.6 C474 328 459 352 457.9 378 C457.5 396 462 411 468.3 423 L491.2 423Z" fill="#409c38"/><g filter="url(#nz)" opacity="0.5"><path d="M490.9 312.6 C474 328 459 352 457.9 378 C457.5 396 462 411 468.3 423 L518 423 C523 409 525 393 524 377 C522 352 508 328 490.9 312.6Z" fill="url(#lfn3)"/></g><g filter="url(#nzd)" opacity="0.45"><path d="M490.9 312.6 C474 328 459 352 457.9 378 C457.5 396 462 411 468.3 423 L518 423 C523 409 525 393 524 377 C522 352 508 328 490.9 312.6Z" fill="url(#lfd3)"/></g><rect x="412.4" y="421.2" width="156.2" height="168.4" fill="url(#potg)"/><rect x="412.4" y="421.2" width="156.2" height="168.4" fill="url(#potv)"/><g filter="url(#nz)" opacity="0.3"><rect x="412.4" y="421.2" width="156.2" height="168.4" fill="url(#potn)"/></g><rect x="440" y="589.6" width="128.6" height="6.6" fill="url(#fadeL)"/><g filter="url(#nzd)" opacity="0.25"><rect x="440" y="589.6" width="128.6" height="6.6" fill="url(#fadeL)"/></g><path d="M570.7 458.5 L666.6 458.5 L656.4 585.2 L583 585.2Z" fill="url(#cupg)"/><g filter="url(#nzd)" opacity="0.22"><path d="M570.7 458.5 L666.6 458.5 L656.4 585.2 L583 585.2Z" fill="url(#cupn)"/></g><rect x="571.8" y="431.6" width="94.4" height="14.4" rx="1.5" fill="#dcdcde"/><g filter="url(#nz)" opacity="0.6"><rect x="571.8" y="431.6" width="94.4" height="14.4" fill="#fff"/></g><rect x="561" y="445.4" width="114.8" height="13.4" rx="1.2" fill="url(#rimg)"/><path d="M571.6 487.4 L665.6 487.4 L662.8 536.8 L576 536.8Z" fill="url(#slv)"/><g filter="url(#nz)" opacity="0.4"><path d="M571.6 487.4 L665.6 487.4 L662.8 536.8 L576 536.8Z" fill="url(#slvn)"/></g><g filter="url(#nzd)" opacity="0.25"><path d="M571.6 487.4 L665.6 487.4 L662.8 536.8 L576 536.8Z" fill="#000"/></g><circle cx="618.6" cy="511.8" r="17.5" fill="#2d6b26"/><path d="M796 441 L805.8 428.8 C812 452 817.5 480 817.6 512 L817.6 582.4 L795 582.4Z" fill="url(#bags)"/><g filter="url(#nz)" opacity="0.4"><path d="M796 441 L805.8 428.8 C812 452 817.5 480 817.6 512 L817.6 582.4 L795 582.4Z" fill="url(#bagsn)"/></g><path d="M698.5 441 L796.5 441 C798.5 480 799 540 796 582.4 L697 582.4 C695.5 540 695.5 480 698.5 441Z" fill="url(#bagf)"/><path d="M698.5 441 L796.5 441 C798.5 480 799 540 796 582.4 L697 582.4 C695.5 540 695.5 480 698.5 441Z" fill="url(#bagh)"/><g filter="url(#nz)" opacity="0.35"><path d="M698.5 441 L796.5 441 C798.5 480 799 540 796 582.4 L697 582.4 C695.5 540 695.5 480 698.5 441Z" fill="url(#bagfn)"/></g><path d="M701 427.3 L800.5 427.3 L805.8 428.8 L796.8 441.6 L695 441.6Z" fill="url(#flap)"/><text x="155.5" y="473.9" font-size="92" font-weight="bold" font-family="'Liberation Sans','Noto Sans CJK SC',sans-serif" fill="#c5a183" textLength="288" lengthAdjust="spacingAndGlyphs">品质大牌</text><text x="157.8" y="534.4" font-size="42" font-weight="bold" font-family="'Liberation Sans','Noto Sans CJK SC',sans-serif" fill="#c5a183" textLength="131.5" lengthAdjust="spacingAndGlyphs">匠心美食</text><text x="300.1" y="534.4" font-size="42" font-weight="bold" font-family="'Liberation Sans','Noto Sans CJK SC',sans-serif" fill="#c5a183" textLength="65.8" lengthAdjust="spacingAndGlyphs">低至</text><text x="379" y="534.4" font-size="42" font-weight="bold" font-family="'Liberation Sans','Noto Sans CJK SC',sans-serif" fill="#c5a183" textLength="20" lengthAdjust="spacingAndGlyphs">6</text><text x="413.1" y="534.4" font-size="42" font-weight="bold" font-family="'Liberation Sans','Noto Sans CJK SC',sans-serif" fill="#c5a183" textLength="32.9" lengthAdjust="spacingAndGlyphs">折</text></svg><svg class="b" style="left:509.5px;top:591px;" width="16" height="15" viewBox="0 0 16 15"><path d="M0.8 0.6v9.6l2.4-2 1.7 3.8 1.5-0.7-1.7-3.7h3.2z" fill="#111" stroke="#fff" stroke-width="0.7"/><path d="M11 7.2v6M8 10.2h6M11 6.6l-1 1.2h2zM11 13.8l-1-1.2h2zM7.4 10.2l1.2-1v2zM14.6 10.2l-1.2-1v2z" stroke="#222" stroke-width="0.8" fill="#222"/></svg><svg class="b" style="left:958.3px;top:701.6px;" width="9" height="13" viewBox="0 0 9 13"><path d="M0.8 0.6v9.6l2.4-2 1.7 3.8 1.5-0.7-1.7-3.7h3.2z" fill="#111" stroke="#f4f4f4" stroke-width="0.9"/></svg><svg class="b" style="left:0;top:0" width="400" height="740" viewBox="0 0 400 740"><text x="70.8" y="710.6" font-size="33" font-weight="bold" font-family="'Liberation Sans','Noto Sans CJK SC',sans-serif" fill="#66666a" textLength="154.5" lengthAdjust="spacingAndGlyphs">站酷高高手</text></svg>

</div>
<div class="b" style="left:0px;top:747px;width:1194px;height:25.3px;background:#0c0c15;"></div><div class="b" style="left:0px;top:772.3px;width:1194px;height:26px;background:#000;"></div><svg class="b" style="left:10.5px;top:754.5px;" width="11" height="11.5" viewBox="0 0 11 11.5"><path d="M0 1.6l4.6-0.7v4.5h-4.6z M5.4 0.8l5.6-0.8v5.4h-5.6z M0 6.1h4.6v4.5l-4.6-0.7z M5.4 6.1h5.6v5.4l-5.6-0.8z" fill="#fff"/></svg><div class="b" style="left:30.8px;top:747.6px;width:216.8px;height:24.4px;background:#f2f2f2;"></div><svg class="b" style="left:36.5px;top:754px;" width="14" height="14" viewBox="0 0 14 14"><circle cx="7" cy="7" r="5.3" fill="none" stroke="#111" stroke-width="1.7"/></svg><div class="t" style="left:56.5px;top:755.5px;font-size:8.79px;line-height:10.5px;color:#3a3a3a;">在这里输入你要搜索的内容</div><svg class="b" style="left:230px;top:754.5px;" width="8" height="12" viewBox="0 0 8 12"><rect x="2.2" y="0.6" width="3.6" height="6.6" rx="1.8" fill="none" stroke="#444" stroke-width="1"/><path d="M0.8 5.5v1a3.2 3.2 0 0 0 6.4 0v-1M4 9.8v1.6" stroke="#444" stroke-width="1" fill="none"/></svg><svg class="b" style="left:256.8px;top:754.6px;" width="12" height="11" viewBox="0 0 12 11"><rect x="2.4" y="2.8" width="6.2" height="5.4" fill="none" stroke="#fff" stroke-width="1.2"/><path d="M0.8 1h9.4M0.8 10h9.4" stroke="#fff" stroke-width="1.2"/><path d="M1 2.6v5.8" stroke="#fff" stroke-width="0.9"/><rect x="10.6" y="3" width="1.2" height="1.3" fill="#fff"/><rect x="10.6" y="6.8" width="1.2" height="1.3" fill="#fff"/></svg><svg class="b" style="left:287.5px;top:752.8px;" width="14.5" height="12.5" viewBox="0 0 14.5 12.5"><path d="M0.5 1.5h4.5l1 1.3h8v8.7h-13.5z" fill="#f3d77e"/><path d="M0.5 4h13.5v7.5h-13.5z" fill="#f7e6a4"/><rect x="3.5" y="7.8" width="7.5" height="3.7" fill="#74b6d8"/><rect x="5" y="9" width="4.5" height="1" fill="#e8f2f7"/></svg><svg class="b" style="left:317.5px;top:752px;" width="16" height="16" viewBox="0 0 16 16"><path d="M8 0.8l6.4 3.6v7.2l-6.4 3.6-6.4-3.6v-7.2z" fill="#3a62cc"/><path d="M8 2.6l4.9 2.7v5.4l-4.9 2.7-4.9-2.7v-5.4z" fill="#5680e4"/><path d="M4.6 6.2l1.5 3.8 1.9-3.2 1.9 3.2 1.5-3.8" stroke="#fff" stroke-width="1.2" fill="none" stroke-linejoin="round"/></svg><svg class="b" style="left:348.5px;top:751px;" width="16" height="16" viewBox="0 0 16 16"><defs><radialGradient id="ffg" cx="0.7" cy="0.2" r="1"><stop offset="0" stop-color="#ffe14a"/><stop offset="0.4" stop-color="#ff8a1a"/><stop offset="1" stop-color="#d21f2c"/></radialGradient></defs><circle cx="8" cy="8.3" r="7.2" fill="url(#ffg)"/><circle cx="8.6" cy="7.6" r="3.6" fill="#43389a"/><path d="M4 7.4c1-2 3-2.6 4.6-1.9c-1.4 0.2-1.6 1.5-0.6 2.1c1 0.6 0.7 2.6-1.2 2.7c-2 0-3.2-1.5-2.8-2.9z" fill="#ff9f2a"/></svg><div class="b" style="left:372px;top:747px;width:30.5px;height:25.3px;background:#2e2e36;"></div><div class="b" style="left:372px;top:771px;width:30.5px;height:1.3px;background:#8d8da0;"></div><div class="b" style="left:380.5px;top:752.8px;width:14px;height:13px;background:#0b2c36;border:1.1px solid #3fa3ad;box-sizing:border-box"></div><div class="t" style="left:382.6px;top:754.8px;font-size:7.6px;line-height:9px;color:#4dbcc6;font-weight:bold;letter-spacing:-0.2px">Ps</div><div class="b" style="left:283px;top:771px;width:25px;height:1.3px;background:#7e7e90;"></div><div class="b" style="left:313.5px;top:771px;width:25px;height:1.3px;background:#7e7e90;"></div><div class="b" style="left:344px;top:771px;width:25px;height:1.3px;background:#7e7e90;"></div><svg class="b" style="left:1095.5px;top:755px;" width="11" height="11" viewBox="0 0 11 11"><circle cx="3.6" cy="5.4" r="1.7" fill="none" stroke="#fff" stroke-width="1"/><path d="M0.8 10.4c0.2-2.2 1.3-3 2.8-3s2.6 0.8 2.8 3" fill="none" stroke="#fff" stroke-width="1"/><circle cx="7.9" cy="2.6" r="1.5" fill="none" stroke="#fff" stroke-width="0.9"/><path d="M6.6 5.6c0.6-0.8 2.6-0.8 3.4 0.6" fill="none" stroke="#fff" stroke-width="0.9"/></svg><svg class="b" style="left:1120px;top:757px;" width="9" height="6" viewBox="0 0 9 6"><path d="M0.8 5l3.7-3.8 3.7 3.8" fill="none" stroke="#fff" stroke-width="1.1"/></svg><svg class="b" style="left:1133px;top:754.5px;" width="12" height="11" viewBox="0 0 12 11"><path d="M0.6 4h2l2.6-2.4v7.8l-2.6-2.4h-2z" fill="none" stroke="#fff" stroke-width="0.9"/><path d="M6.8 3.6c0.9 0.9 0.9 2.9 0 3.8M8.3 2.3c1.6 1.6 1.6 4.8 0 6.4M9.8 1.1c2.2 2.2 2.2 6.6 0 8.8" fill="none" stroke="#fff" stroke-width="0.8"/></svg><svg class="b" style="left:1149px;top:754.5px;" width="11" height="12" viewBox="0 0 11 12"><circle cx="5.5" cy="6" r="5.2" fill="#3a0d14"/><path d="M3.2 3.4c0.4-2.2 4.2-2.2 4.6 0z" fill="#c84a54"/><circle cx="5.5" cy="4.6" r="1.7" fill="#f0d8d8"/><path d="M2.2 10.4c0.2-2.6 1.6-3.6 3.3-3.6s3.1 1 3.3 3.6z" fill="#f4ecec"/></svg><div class="t" style="left:1163.6px;top:755.1px;font-size:10.2px;line-height:12px;color:#fff">英</div><svg class="b" style="left:1182px;top:754.5px;" width="12" height="12" viewBox="0 0 12 12"><path d="M0.6 0.6h11.4v8.6h-7.4l-2.2 2v-2h-1.8z" fill="#f6f6f6"/><path d="M2.4 3h8M2.4 4.9h8M2.4 6.8h5" stroke="#15151c" stroke-width="0.8"/></svg><div class="b" style="left:788.7px;top:782.8px;width:397px;height:30px;background:#865b21;border-radius:15px"></div><div class="t" style="left:961.5px;top:782.8px;font-size:36px;line-height:36px;color:#f4d21f;font-weight:bold;transform:scaleX(0.735);transform-origin:0 0">cndesign</div><div class="t" style="left:1091px;top:781.3px;font-size:33px;line-height:33px;color:#f49c1c;font-weight:bold;letter-spacing:0.3px">123</div><svg class="b" style="left:794px;top:789px;" width="42" height="9" viewBox="0 0 42 9"><path d="M2.2 5.6l1.6 3.4M12.4 2.2l1 4.2M25.6 1.4l-1.2 4.6M36.2 4.6l0.8 4.4" stroke="#f0c04a" stroke-width="2" stroke-linecap="round" fill="none"/><path d="M19 7.4h8v2h-8z" fill="#e9a93c"/></svg><div class="b" style="left:0px;top:0px;width:1px;height:798px;background:#f8f8f8;"></div><div class="b" style="left:0px;top:766px;width:1px;height:16px;background:#c9d1ea;"></div>
<div class="b" style="left:1153.3px;top:344.3px;width:60px;height:176.4px;background:#1e1e20;border-radius:6.5px"></div><div class="b" style="left:1153px;top:532.8px;width:60px;height:52px;background:#1e1e20;border-radius:6.5px"></div><svg class="b" style="left:1168px;top:371px;" width="24" height="24" viewBox="0 0 24 24"><path d="M8.2 11.4l6.8-3.7M8.2 13.4l6.8 3.6" stroke="#fff" stroke-width="2" fill="none"/><circle cx="5.8" cy="12.4" r="3" fill="none" stroke="#fff" stroke-width="2"/><circle cx="17.6" cy="6.5" r="3" fill="none" stroke="#fff" stroke-width="2"/><circle cx="17.6" cy="18" r="3" fill="none" stroke="#fff" stroke-width="2"/></svg><svg class="b" style="left:1166px;top:423px;" width="24" height="22" viewBox="0 0 24 22"><path d="M12 1.8v11.4M6.6 8.2l5.4 5.4 5.4-5.4" stroke="#fff" stroke-width="2.1" fill="none" stroke-linecap="round" stroke-linejoin="round"/><path d="M4 15.4v4h16.4v-4" stroke="#fff" stroke-width="2.1" fill="none" stroke-linecap="round" stroke-linejoin="round"/></svg><svg class="b" style="left:1168px;top:470px;" width="24" height="25" viewBox="0 0 24 25"><path d="M2.6 6.6h19M9 6.2v-1.2c0-1.2 0.7-1.9 1.9-1.9h2.2c1.2 0 1.9 0.7 1.9 1.9v1.2" stroke="#fff" stroke-width="2" fill="none" stroke-linecap="round"/><path d="M4.6 6.8l0.9 12.4c0.2 2 1.3 3.1 3.3 3.1h6.4c2 0 3.1-1.1 3.3-3.1l0.9-12.4" stroke="#fff" stroke-width="2" fill="none"/><path d="M10 12.2v4.6M14 12.2v4.6" stroke="#fff" stroke-width="2.1" stroke-linecap="round"/></svg><svg class="b" style="left:1160px;top:540px;" width="40" height="40" viewBox="0 0 40 40"><g transform="translate(24.8 13.3) rotate(34)"><path d="M-7 0h14M-3.7 0.2v6.2l-4.3 5.2h16l-4.3-5.2v-6.2M0 11.8v7.9" stroke="#f1d88c" stroke-width="1.9" fill="none" stroke-linejoin="round" stroke-linecap="round"/></g></svg><div class="b" style="left:1178.9px;top:533.4px;width:30px;height:11.4px;background:#e2555a;border-radius:6px"></div><div class="t" style="left:1182.6px;top:534.1px;font-size:7.8px;line-height:10px;color:#fff;font-weight:bold">NE</div><div class="t" style="left:482.6px;top:726.2px;font-size:18.1px;line-height:21.7px;letter-spacing:0.69px;color:#111;-webkit-text-stroke:2.4px #111;">并且把我们的所有的噪点图形</div><div class="t" style="left:482.6px;top:726.2px;font-size:18.1px;line-height:21.7px;letter-spacing:0.69px;color:#fff;-webkit-text-stroke:0;">并且把我们的所有的噪点图形</div>
</body></html>
